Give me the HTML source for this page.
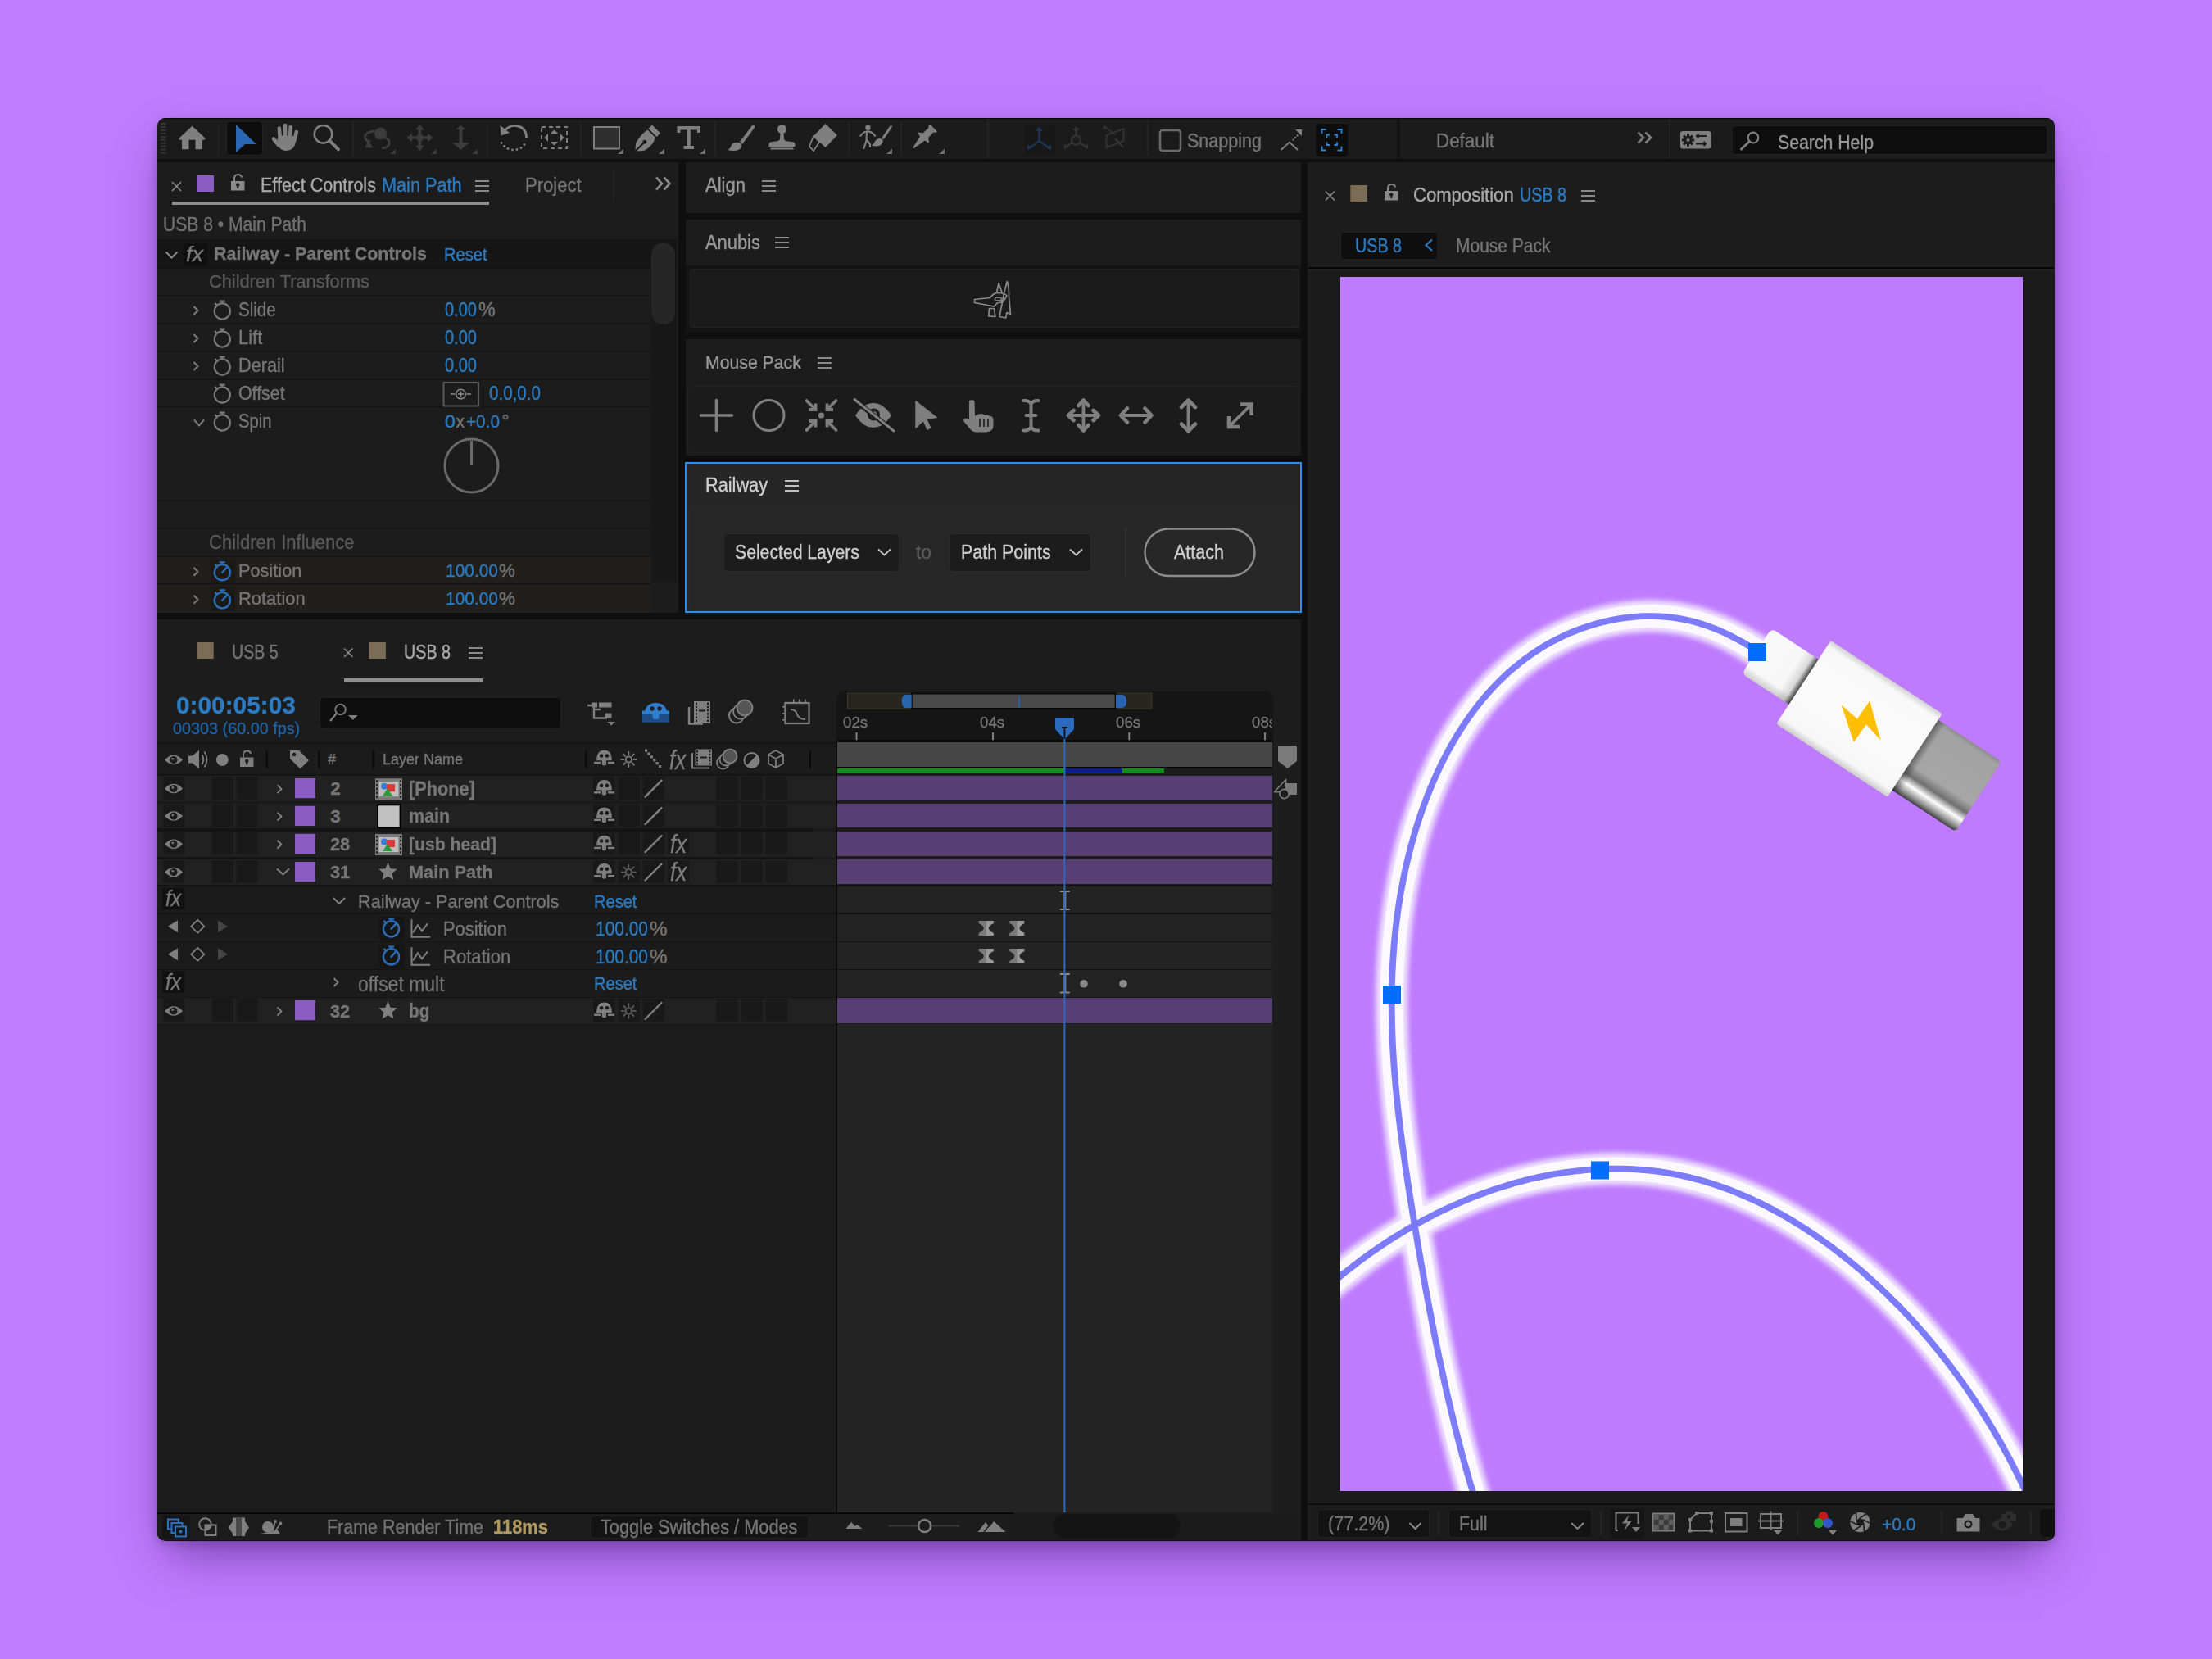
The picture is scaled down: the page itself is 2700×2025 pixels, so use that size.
<!DOCTYPE html>
<html><head><meta charset="utf-8"><style>
html,body{margin:0;padding:0;width:2700px;height:2025px;overflow:hidden;background:#be7cfe;font-family:"Liberation Sans",sans-serif;}
div{-webkit-text-stroke:0.35px currentColor;}

</style></head><body>
<div style="position:absolute;left:192px;top:144px;width:2316px;height:1737px;border-radius:10px;box-shadow:0 28px 56px -14px rgba(50,0,90,0.5),0 4px 12px rgba(30,0,60,0.22);background:#0e0e0e;"></div>
<div style="position:absolute;left:192px;top:144px;width:2316px;height:1737px;border-radius:10px;overflow:hidden;">
<div style="position:absolute;left:-192px;top:-144px;width:2700px;height:2025px;">
<div style="position:absolute;left:192px;top:145px;width:2316px;height:49px;background:#1b1b1b;"></div>
<div style="position:absolute;left:192px;top:144px;width:2316px;height:1px;background:#050505;"></div>
<div style="position:absolute;left:192px;top:198px;width:636px;height:550px;background:#1c1c1c;"></div>
<div style="position:absolute;left:837px;top:198px;width:751px;height:62px;background:#1c1c1c;"></div>
<div style="position:absolute;left:837px;top:268px;width:751px;height:137.5px;background:#1c1c1c;"></div>
<div style="position:absolute;left:837px;top:413.5px;width:751px;height:142px;background:#1c1c1c;"></div>
<div style="position:absolute;left:836px;top:564px;width:753px;height:184px;background:#262626;"></div>
<div style="position:absolute;box-sizing:border-box;left:836px;top:564px;width:753px;height:184px;background:transparent;border:2px solid #2d8df0;border-radius:0px;"></div>
<div style="position:absolute;left:192px;top:756px;width:1396px;height:1124px;background:#1c1c1c;"></div>
<div style="position:absolute;left:1596px;top:198px;width:912px;height:1682px;background:#1c1c1c;"></div>
<svg style="position:absolute;left:0;top:0;z-index:2" width="2700" height="2025"><rect x="196" y="150.00" width="6.5" height="2" fill="#343434"/><rect x="196" y="153.95" width="6.5" height="2" fill="#343434"/><rect x="196" y="157.90" width="6.5" height="2" fill="#343434"/><rect x="196" y="161.85" width="6.5" height="2" fill="#343434"/><rect x="196" y="165.80" width="6.5" height="2" fill="#343434"/><rect x="196" y="169.75" width="6.5" height="2" fill="#343434"/><rect x="196" y="173.70" width="6.5" height="2" fill="#343434"/><rect x="196" y="177.65" width="6.5" height="2" fill="#343434"/><rect x="196" y="181.60" width="6.5" height="2" fill="#343434"/><rect x="196" y="185.55" width="6.5" height="2" fill="#343434"/><rect x="265.5" y="148" width="2" height="42" fill="#232323"/><rect x="430" y="148" width="2" height="42" fill="#232323"/><rect x="593.6" y="148" width="2" height="42" fill="#232323"/><rect x="708" y="148" width="2" height="42" fill="#232323"/><rect x="872" y="148" width="2" height="42" fill="#232323"/><rect x="1035.6" y="148" width="2" height="42" fill="#232323"/><rect x="1099" y="148" width="2" height="42" fill="#232323"/><rect x="1399.5" y="148" width="2" height="42" fill="#232323"/><rect x="1204.5" y="145" width="3" height="49" fill="#222"/><rect x="1705.5" y="145" width="3" height="49" fill="#111"/><rect x="2037" y="145" width="2" height="49" fill="#222"/><path d="M234.5 153.8 L218.5 168.8 Q218 170 219.5 170.5 L222 171 L222 182.3 L230.5 182.3 L230.5 170.8 L238.5 170.8 L238.5 182.3 L247 182.3 L247 171 L249.5 170.5 Q251 170 250.5 168.8 Z" fill="#7f7f7f"/><rect x="276.5" y="148" width="44" height="41.5" rx="5" fill="#0d0d0d" stroke="#242424" stroke-width="1"/><path d="M288 152 L313 176 L299 176 L288 186 Z" fill="#2a67b2"/><g stroke="#7f7f7f" stroke-width="4.6" stroke-linecap="round" fill="none"><path d="M341.8 169 L340.8 156.5"/><path d="M348 168 L348 153"/><path d="M354 168 L354.8 155"/><path d="M359.5 171 L361.8 161"/><path d="M340 177 L334 169.5"/></g><path d="M338.5 170 Q339 166 344 165.5 L358 166 Q362 167 361 173 Q359 184 349.5 184 Q341.5 184 338.5 176 Z" fill="#7f7f7f"/><circle cx="394.5" cy="163.8" r="10.8" fill="none" stroke="#7f7f7f" stroke-width="2.6"/><line x1="402.5" y1="171.8" x2="413" y2="182.3" stroke="#7f7f7f" stroke-width="4" stroke-linecap="round"/><circle cx="464.5" cy="163" r="7.5" fill="#3b3b3b"/><path d="M457 160 Q446 161 445.5 167 Q446 172 452 173" fill="none" stroke="#3b3b3b" stroke-width="3"/><path d="M469 167 Q476 170 475 176 Q473 181 466 180.5" fill="none" stroke="#3b3b3b" stroke-width="3"/><path d="M449 171 L456 180.5 L446 180.5 Z" fill="#3b3b3b"/><path d="M512.5 152 L518 158.5 L514.3 158.5 L514.3 166.2 L522 166.2 L522 162.5 L528.5 168 L522 173.5 L522 169.8 L514.3 169.8 L514.3 177.5 L518 177.5 L512.5 184 L507 177.5 L510.7 177.5 L510.7 169.8 L503 169.8 L503 173.5 L496.5 168 L503 162.5 L503 166.2 L510.7 166.2 L510.7 158.5 L507 158.5 Z" fill="#3b3b3b"/><circle cx="512.5" cy="168" r="4.5" fill="#3b3b3b"/><path d="M562.5 153 L568.5 158 L564.5 158 L564.5 174 L573 174 L562.5 183 L552 174 L560.5 174 L560.5 158 L556.5 158 Z" fill="#3b3b3b"/><path d="M483 181.5 L483 188 L476 188 Z" fill="#3a3a3a"/><path d="M533 181.5 L533 188 L526 188 Z" fill="#3a3a3a"/><path d="M583 181.5 L583 188 L576 188 Z" fill="#3a3a3a"/><path d="M761 181.5 L761 188 L754 188 Z" fill="#6f6f6f"/><path d="M811 181.5 L811 188 L804 188 Z" fill="#6f6f6f"/><path d="M861 181.5 L861 188 L854 188 Z" fill="#6f6f6f"/><path d="M1089 181.5 L1089 188 L1082 188 Z" fill="#6f6f6f"/><path d="M1153 181.5 L1153 188 L1146 188 Z" fill="#6f6f6f"/><path d="M613.5 163 Q620 152.5 630 153.5 Q642.5 155.5 642.5 168" fill="none" stroke="#7f7f7f" stroke-width="2.8"/><path d="M610.5 153 L611.5 165.5 L622 162 Z" fill="#7f7f7f"/><circle cx="612" cy="174.5" r="1.4" fill="#7f7f7f"/><circle cx="615.5" cy="178.5" r="1.4" fill="#7f7f7f"/><circle cx="620" cy="181.5" r="1.4" fill="#7f7f7f"/><circle cx="625.5" cy="183" r="1.4" fill="#7f7f7f"/><circle cx="631" cy="182.5" r="1.4" fill="#7f7f7f"/><circle cx="636" cy="180.5" r="1.4" fill="#7f7f7f"/><circle cx="640" cy="176.5" r="1.4" fill="#7f7f7f"/><rect x="661" y="155" width="31" height="26" fill="none" stroke="#7f7f7f" stroke-width="2" stroke-dasharray="5 4"/><path d="M676.5 158.5 L681.5 163 L671.5 163 Z M676.5 177.5 L681.5 173 L671.5 173 Z M664.5 168 L669 163 L669 173 Z M688.5 168 L684 163 L684 173 Z" fill="#7f7f7f"/><rect x="725" y="155" width="31" height="26.5" fill="#2e2e2e" stroke="#7f7f7f" stroke-width="2"/><path d="M796 152.5 L806 162.5 L801.5 167 L791.5 157 Z" fill="#7f7f7f"/><path d="M790.5 158.5 L800 168 Q797 178 786.5 183.8 Q781 184.5 777 184.5 L786 175.5 A2.5 2.5 0 1 0 784.5 174 L775.5 183 Q775.5 179.5 776.3 174.3 Q782 164 790.5 158.5 Z" fill="#7f7f7f"/><path d="M826.5 154 L855 154 L855 162 L851 162 L851 158.5 L842.8 158.5 L842.8 178 L847 178 L847 182 L834.5 182 L834.5 178 L838.7 178 L838.7 158.5 L830.5 158.5 L830.5 162 L826.5 162 Z" fill="#7f7f7f"/><path d="M920 152.5 Q922 153 920.5 156.5 L906 176 L903 173 L917.5 154 Q919 152.3 920 152.5 Z" fill="#7f7f7f"/><path d="M902.5 174 L905.5 177 Q905 184 896 184 Q891 184 888 183 Q891.5 181.5 892.5 178 Q894 173 902.5 174 Z" fill="#7f7f7f"/><circle cx="954.5" cy="157.6" r="5.6" fill="#7f7f7f"/><path d="M952.5 162 L956.5 162 L957 170 Q958 172 962 172.5 L968 173.3 Q970.5 173.8 970.5 176 L970.5 179 L938.5 179 L938.5 176 Q938.5 173.8 941 173.3 L947 172.5 Q951 172 952 170 Z" fill="#7f7f7f"/><rect x="940.5" y="180.5" width="28" height="2" fill="#7f7f7f"/><path d="M1007.5 151 L1022 165 L1007.5 180 L993 166 Z" fill="#7f7f7f"/><path d="M993 166 L1000.5 173 L993 184 L988 178.5 Z" fill="none" stroke="#7f7f7f" stroke-width="1.8"/><circle cx="1059.5" cy="155.8" r="3.2" fill="#7f7f7f"/><path d="M1050 166.5 Q1053 161 1058 160.5 Q1063 160 1067 164.5 L1068.5 166.5" fill="none" stroke="#7f7f7f" stroke-width="2.2"/><path d="M1058 161 L1057.5 172 L1054 182" fill="none" stroke="#7f7f7f" stroke-width="2.2"/><path d="M1058 171 L1062 176 L1062 180" fill="none" stroke="#7f7f7f" stroke-width="2.2"/><path d="M1088.5 153 Q1089.5 154 1088 156.5 L1078.5 170.5 L1076 168.5 L1086 154.3 Q1087.5 152.5 1088.5 153 Z" fill="#7f7f7f"/><path d="M1075 169 L1078 171.5 Q1077 178 1070 178.5 Q1066.5 178.5 1064 177.5 Q1067 175.5 1068 172.5 Q1070 168.5 1075 169 Z" fill="#7f7f7f"/><path d="M1135.5 152 L1143.5 160 Q1144 161.5 1142.5 161.7 L1139.5 161.5 L1133 168 L1134 173 Q1134 174.5 1132.5 174 L1129 171.5 L1115.5 181 L1114 180.5 L1123 166.5 L1120.5 163 Q1120 161.5 1121.5 161.5 L1126.5 162.5 L1133.5 156 L1133.5 153 Q1133.8 151.5 1135.5 152 Z" fill="#7f7f7f"/><rect x="1249.5" y="151" width="40" height="40" rx="5" fill="#181818" stroke="#1f1f1f"/><path d="M1268.5 172 L1268.5 159 M1268.5 172 L1257 180.5 M1268.5 172 L1280 180.5" stroke="#1c3554" stroke-width="2.4" fill="none"/><path d="M1268.5 154.5 L1273 160 L1264 160 Z M1253.5 182.5 L1254.5 176 L1259.5 181 Z M1283.5 182.5 L1282.5 176 L1277.5 181 Z" fill="#1c3554"/><circle cx="1313.5" cy="171" r="5.5" fill="none" stroke="#333" stroke-width="2.4"/><path d="M1313.5 165.5 L1313.5 157 M1309 174 L1301 179.5 M1318 174 L1326 179.5" stroke="#333" stroke-width="2.4" fill="none"/><path d="M1313.5 154 L1318 159 L1309 159 Z M1298.5 182 L1299.5 175.5 L1304 180 Z M1328.5 182 L1327.5 175.5 L1323 180 Z" fill="#333"/><path d="M1350.5 165 L1371.5 157 L1371.5 172 L1350.5 180 Z" fill="none" stroke="#333" stroke-width="2"/><path d="M1347 154 L1361 164 M1361 169 L1371 180" stroke="#333" stroke-width="2"/><path d="M1346 153.5 L1352 154.5 L1347.5 159 Z" fill="#333"/><rect x="1416" y="159" width="25" height="25" rx="3" fill="none" stroke="#6a6a6a" stroke-width="2.5"/><path d="M1563.5 183 L1574 173.5 L1584 183" fill="none" stroke="#7f7f7f" stroke-width="2"/><path d="M1589 158 L1589 166 L1581 158 Z" fill="#7f7f7f"/><rect x="1577.5" y="169.5" width="2" height="2" fill="#7f7f7f"/><rect x="1580" y="167" width="2" height="2" fill="#7f7f7f"/><rect x="1582.5" y="164.5" width="2" height="2" fill="#7f7f7f"/><rect x="1605.5" y="150.5" width="40.5" height="41.5" rx="5" fill="#0d0d0d" stroke="#1f1f1f"/><path d="M1613.5 163 L1613.5 158 L1618.5 158 M1632.5 158 L1637.5 158 L1637.5 163 M1637.5 178.5 L1637.5 183.5 L1632.5 183.5 M1618.5 183.5 L1613.5 183.5 L1613.5 178.5" fill="none" stroke="#2f86d6" stroke-width="1.8"/><path d="M1619.5 168 L1619.5 164.5 L1623 164.5 M1628.5 164.5 L1632 164.5 L1632 168 M1632 173.5 L1632 177 L1628.5 177 M1623 177 L1619.5 177 L1619.5 173.5" fill="none" stroke="#2f86d6" stroke-width="1.8"/><path d="M1999.5 161.5 L2006 168 L1999.5 174.5 M2008.5 161.5 L2015 168 L2008.5 174.5" fill="none" stroke="#7f7f7f" stroke-width="2.6"/><rect x="2051" y="160" width="37.5" height="21.5" rx="3" fill="#7f7f7f"/><circle cx="2060.5" cy="171" r="5.3" fill="#1b1b1b"/><circle cx="2060.5" cy="171" r="2" fill="#7f7f7f"/><rect x="2065.20" y="169.50" width="3" height="3" fill="#1b1b1b" transform="rotate(0 2066.70 171.00)"/><rect x="2063.38" y="173.88" width="3" height="3" fill="#1b1b1b" transform="rotate(45 2064.88 175.38)"/><rect x="2059.00" y="175.70" width="3" height="3" fill="#1b1b1b" transform="rotate(90 2060.50 177.20)"/><rect x="2054.62" y="173.88" width="3" height="3" fill="#1b1b1b" transform="rotate(135 2056.12 175.38)"/><rect x="2052.80" y="169.50" width="3" height="3" fill="#1b1b1b" transform="rotate(180 2054.30 171.00)"/><rect x="2054.62" y="165.12" width="3" height="3" fill="#1b1b1b" transform="rotate(225 2056.12 166.62)"/><rect x="2059.00" y="163.30" width="3" height="3" fill="#1b1b1b" transform="rotate(270 2060.50 164.80)"/><rect x="2063.38" y="165.12" width="3" height="3" fill="#1b1b1b" transform="rotate(315 2064.88 166.62)"/><path d="M2071 166 L2083 166 M2073.5 163.5 L2071 166 L2073.5 168.5 M2070 175.5 L2082 175.5 M2079.5 173 L2082 175.5 L2079.5 178" fill="none" stroke="#1b1b1b" stroke-width="2"/><rect x="2114" y="153.5" width="385" height="35" rx="4" fill="#0e0e0e" stroke="#242424" stroke-width="1"/><circle cx="2140" cy="168" r="6.3" fill="none" stroke="#7f7f7f" stroke-width="2.2"/><line x1="2135.5" y1="172.5" x2="2125.5" y2="182" stroke="#7f7f7f" stroke-width="3" stroke-linecap="round"/></svg>
<div style="position:absolute;z-index:3;left:1449.00px;top:160.52px;font-size:23.62px;line-height:23.62px;font-weight:400;font-style:normal;letter-spacing:0.000px;color:#767676;white-space:pre;transform:scaleX(0.9107);transform-origin:0 0;">Snapping</div>
<div style="position:absolute;z-index:3;left:1753.00px;top:160.52px;font-size:23.62px;line-height:23.62px;font-weight:400;font-style:normal;letter-spacing:0.000px;color:#767676;white-space:pre;transform:scaleX(0.9481);transform-origin:0 0;">Default</div>
<div style="position:absolute;z-index:3;left:2170.00px;top:161.53px;font-size:24.78px;line-height:24.78px;font-weight:400;font-style:normal;letter-spacing:0.000px;color:#999;white-space:pre;transform:scaleX(0.8584);transform-origin:0 0;">Search Help</div>
<div style="position:absolute;z-index:3;left:317.50px;top:213.86px;font-size:24.64px;line-height:24.64px;font-weight:400;font-style:normal;letter-spacing:0.000px;color:#ababab;white-space:pre;transform:scaleX(0.8751);transform-origin:0 0;">Effect Controls</div>
<div style="position:absolute;z-index:3;left:465.50px;top:213.86px;font-size:24.64px;line-height:24.64px;font-weight:400;font-style:normal;letter-spacing:0.000px;color:#2c7cc4;white-space:pre;transform:scaleX(0.8794);transform-origin:0 0;">Main Path</div>
<div style="position:absolute;z-index:3;left:641.00px;top:214.72px;font-size:23.62px;line-height:23.62px;font-weight:400;font-style:normal;letter-spacing:0.000px;color:#767676;white-space:pre;transform:scaleX(0.9324);transform-origin:0 0;">Project</div>
<div style="position:absolute;z-index:3;left:199.00px;top:261.86px;font-size:24.64px;line-height:24.64px;font-weight:400;font-style:normal;letter-spacing:0.000px;color:#727272;white-space:pre;transform:scaleX(0.8558);transform-origin:0 0;">USB 8 • Main Path</div>
<div style="position:absolute;left:192px;top:292px;width:634px;height:36px;background:#151515;"></div>
<div style="position:absolute;z-index:3;left:261.00px;top:299.21px;font-size:22.46px;line-height:22.46px;font-weight:700;font-style:normal;letter-spacing:0.000px;color:#767676;white-space:pre;transform:scaleX(0.9558);transform-origin:0 0;">Railway - Parent Controls</div>
<div style="position:absolute;z-index:3;left:541.50px;top:299.51px;font-size:22.46px;line-height:22.46px;font-weight:400;font-style:normal;letter-spacing:0.000px;color:#2c7cc4;white-space:pre;transform:scaleX(0.8954);transform-origin:0 0;">Reset</div>
<div style="position:absolute;left:794px;top:328px;width:32px;height:383px;background:#181818;"></div>
<div style="position:absolute;left:192px;top:679.5px;width:602px;height:33px;background:#201f1c;"></div>
<div style="position:absolute;left:192px;top:713.5px;width:602px;height:34px;background:#201f1c;"></div>
<div style="position:absolute;z-index:3;left:255.00px;top:333.21px;font-size:22.46px;line-height:22.46px;font-weight:400;font-style:normal;letter-spacing:0.000px;color:#5a5a5a;white-space:pre;transform:scaleX(0.9695);transform-origin:0 0;">Children Transforms</div>
<div style="position:absolute;z-index:3;left:291.40px;top:367.09px;font-size:23.19px;line-height:23.19px;font-weight:400;font-style:normal;letter-spacing:0.000px;color:#767676;white-space:pre;transform:scaleX(0.8858);transform-origin:0 0;">Slide</div>
<div style="position:absolute;z-index:3;left:291.40px;top:401.09px;font-size:23.19px;line-height:23.19px;font-weight:400;font-style:normal;letter-spacing:0.000px;color:#767676;white-space:pre;transform:scaleX(0.9462);transform-origin:0 0;">Lift</div>
<div style="position:absolute;z-index:3;left:291.40px;top:435.09px;font-size:23.19px;line-height:23.19px;font-weight:400;font-style:normal;letter-spacing:0.000px;color:#767676;white-space:pre;transform:scaleX(0.9352);transform-origin:0 0;">Derail</div>
<div style="position:absolute;z-index:3;left:291.40px;top:469.09px;font-size:23.19px;line-height:23.19px;font-weight:400;font-style:normal;letter-spacing:0.000px;color:#767676;white-space:pre;transform:scaleX(0.9211);transform-origin:0 0;">Offset</div>
<div style="position:absolute;z-index:3;left:291.40px;top:503.09px;font-size:23.19px;line-height:23.19px;font-weight:400;font-style:normal;letter-spacing:0.000px;color:#767676;white-space:pre;transform:scaleX(0.8754);transform-origin:0 0;">Spin</div>
<div style="position:absolute;z-index:3;left:543.00px;top:367.09px;font-size:23.19px;line-height:23.19px;font-weight:400;font-style:normal;letter-spacing:0.000px;color:#2c7cc4;white-space:pre;transform:scaleX(0.8625);transform-origin:0 0;">0.00</div>
<div style="position:absolute;z-index:3;left:584.00px;top:367.09px;font-size:23.19px;line-height:23.19px;font-weight:400;font-style:normal;letter-spacing:0.000px;color:#767676;white-space:pre;">%</div>
<div style="position:absolute;z-index:3;left:543.00px;top:401.09px;font-size:23.19px;line-height:23.19px;font-weight:400;font-style:normal;letter-spacing:0.000px;color:#2c7cc4;white-space:pre;transform:scaleX(0.8625);transform-origin:0 0;">0.00</div>
<div style="position:absolute;z-index:3;left:543.00px;top:435.09px;font-size:23.19px;line-height:23.19px;font-weight:400;font-style:normal;letter-spacing:0.000px;color:#2c7cc4;white-space:pre;transform:scaleX(0.8625);transform-origin:0 0;">0.00</div>
<div style="position:absolute;z-index:3;left:597.00px;top:469.09px;font-size:23.19px;line-height:23.19px;font-weight:400;font-style:normal;letter-spacing:0.000px;color:#2c7cc4;white-space:pre;transform:scaleX(0.8879);transform-origin:0 0;">0.0,0.0</div>
<div style="position:absolute;z-index:3;left:543.10px;top:503.24px;font-size:22.90px;line-height:22.90px;font-weight:400;font-style:normal;letter-spacing:0.000px;color:#2c7cc4;white-space:pre;">0</div>
<div style="position:absolute;z-index:3;left:556.20px;top:504.07px;font-size:21.92px;line-height:21.92px;font-weight:400;font-style:normal;letter-spacing:0.000px;color:#767676;white-space:pre;">x</div>
<div style="position:absolute;z-index:3;left:569.10px;top:503.24px;font-size:22.90px;line-height:22.90px;font-weight:400;font-style:normal;letter-spacing:0.000px;color:#2c7cc4;white-space:pre;transform:scaleX(0.9067);transform-origin:0 0;">+0.0</div>
<div style="position:absolute;z-index:3;left:612.50px;top:503.61px;font-size:22.46px;line-height:22.46px;font-weight:400;font-style:normal;letter-spacing:0.000px;color:#767676;white-space:pre;">°</div>
<div style="position:absolute;z-index:3;left:255.00px;top:650.84px;font-size:23.48px;line-height:23.48px;font-weight:400;font-style:normal;letter-spacing:0.000px;color:#5a5a5a;white-space:pre;transform:scaleX(0.9385);transform-origin:0 0;">Children Influence</div>
<div style="position:absolute;z-index:3;left:291.40px;top:686.23px;font-size:22.32px;line-height:22.32px;font-weight:400;font-style:normal;letter-spacing:0.000px;color:#767676;white-space:pre;transform:scaleX(0.9741);transform-origin:0 0;">Position</div>
<div style="position:absolute;z-index:3;left:543.50px;top:686.23px;font-size:22.32px;line-height:22.32px;font-weight:400;font-style:normal;letter-spacing:0.000px;color:#2c7cc4;white-space:pre;transform:scaleX(0.9371);transform-origin:0 0;">100.00</div>
<div style="position:absolute;z-index:3;left:609.00px;top:686.23px;font-size:22.32px;line-height:22.32px;font-weight:400;font-style:normal;letter-spacing:0.000px;color:#767676;white-space:pre;">%</div>
<div style="position:absolute;z-index:3;left:291.40px;top:720.21px;font-size:22.46px;line-height:22.46px;font-weight:400;font-style:normal;letter-spacing:0.000px;color:#767676;white-space:pre;transform:scaleX(0.9765);transform-origin:0 0;">Rotation</div>
<div style="position:absolute;z-index:3;left:543.50px;top:720.21px;font-size:22.46px;line-height:22.46px;font-weight:400;font-style:normal;letter-spacing:0.000px;color:#2c7cc4;white-space:pre;transform:scaleX(0.9311);transform-origin:0 0;">100.00</div>
<div style="position:absolute;z-index:3;left:609.00px;top:720.21px;font-size:22.46px;line-height:22.46px;font-weight:400;font-style:normal;letter-spacing:0.000px;color:#767676;white-space:pre;">%</div>
<svg style="position:absolute;left:0;top:0;z-index:2" width="2700" height="2025"><path d="M210 222 L221 233 M221 222 L210 233" stroke="#8a8a8a" stroke-width="1.6"/><rect x="240" y="214" width="21" height="20" fill="#8a5cc2"/><path d="M286 221 L286 218 Q286 213 290.5 213 Q294.5 213 295 216.5" fill="none" stroke="#8a8a8a" stroke-width="2"/><rect x="282" y="221" width="16.5" height="11.5" fill="#8a8a8a"/><circle cx="290.25" cy="225.5" r="2.2" fill="#1c1c1c"/><rect x="289.2" y="226" width="2.1" height="4" fill="#1c1c1c"/><rect x="580" y="220.00" width="17" height="2" fill="#8a8a8a"/><rect x="580" y="226.00" width="17" height="2" fill="#8a8a8a"/><rect x="580" y="232.00" width="17" height="2" fill="#8a8a8a"/><rect x="210" y="246" width="387" height="4" fill="#8e8e8e"/><rect x="748.5" y="206" width="1.5" height="39" fill="#262626"/><path d="M801 216.5 L808 224 L801 231.5 M810.5 216.5 L817.5 224 L810.5 231.5" fill="none" stroke="#8a8a8a" stroke-width="2.6"/><path d="M202.5 307.5 L209.5 314.5 L216.5 307.5" fill="none" stroke="#8a8a8a" stroke-width="2"/><rect x="224.5" y="296.5" width="28" height="27" fill="#0f0f0f"/><rect x="795" y="296" width="29" height="100" rx="14.5" fill="#262626"/><rect x="192" y="326.8" width="602" height="1.5" fill="#141414"/><rect x="192" y="360.0" width="602" height="1.5" fill="#141414"/><rect x="192" y="394.5" width="602" height="1.5" fill="#141414"/><rect x="192" y="428.2" width="602" height="1.5" fill="#141414"/><rect x="192" y="462.5" width="602" height="1.5" fill="#141414"/><rect x="192" y="496.0" width="602" height="1.5" fill="#141414"/><rect x="192" y="610.0" width="602" height="1.5" fill="#141414"/><rect x="192" y="644.5" width="602" height="1.5" fill="#141414"/><rect x="192" y="678.5" width="602" height="1.5" fill="#141414"/><rect x="192" y="712.0" width="602" height="1.5" fill="#141414"/><path d="M236.5 374.0 L241.5 379.0 L236.5 384.0" fill="none" stroke="#7a7a7a" stroke-width="2"/><circle cx="271.3" cy="380.0" r="9.6" fill="none" stroke="#7a7a7a" stroke-width="2.2"/><rect x="267.8" y="366.5" width="7" height="2.2" fill="#7a7a7a"/><rect x="270.2" y="368.0" width="2.2" height="3" fill="#7a7a7a"/><path d="M262.3 370.0 L264.8 372.5" stroke="#7a7a7a" stroke-width="2.2"/><path d="M236.5 408.0 L241.5 413.0 L236.5 418.0" fill="none" stroke="#7a7a7a" stroke-width="2"/><circle cx="271.3" cy="414.0" r="9.6" fill="none" stroke="#7a7a7a" stroke-width="2.2"/><rect x="267.8" y="400.5" width="7" height="2.2" fill="#7a7a7a"/><rect x="270.2" y="402.0" width="2.2" height="3" fill="#7a7a7a"/><path d="M262.3 404.0 L264.8 406.5" stroke="#7a7a7a" stroke-width="2.2"/><path d="M236.5 442.0 L241.5 447.0 L236.5 452.0" fill="none" stroke="#7a7a7a" stroke-width="2"/><circle cx="271.3" cy="448.0" r="9.6" fill="none" stroke="#7a7a7a" stroke-width="2.2"/><rect x="267.8" y="434.5" width="7" height="2.2" fill="#7a7a7a"/><rect x="270.2" y="436.0" width="2.2" height="3" fill="#7a7a7a"/><path d="M262.3 438.0 L264.8 440.5" stroke="#7a7a7a" stroke-width="2.2"/><circle cx="271.3" cy="482.0" r="9.6" fill="none" stroke="#7a7a7a" stroke-width="2.2"/><rect x="267.8" y="468.5" width="7" height="2.2" fill="#7a7a7a"/><rect x="270.2" y="470.0" width="2.2" height="3" fill="#7a7a7a"/><path d="M262.3 472.0 L264.8 474.5" stroke="#7a7a7a" stroke-width="2.2"/><path d="M237 512.5 L243.0 519.5 L249 512.5" fill="none" stroke="#7a7a7a" stroke-width="2"/><circle cx="271.3" cy="516.0" r="9.6" fill="none" stroke="#7a7a7a" stroke-width="2.2"/><rect x="267.8" y="502.5" width="7" height="2.2" fill="#7a7a7a"/><rect x="270.2" y="504.0" width="2.2" height="3" fill="#7a7a7a"/><path d="M262.3 506.0 L264.8 508.5" stroke="#7a7a7a" stroke-width="2.2"/><rect x="541.5" y="467" width="42.5" height="28.5" fill="none" stroke="#5a5a5a" stroke-width="2"/><circle cx="562.5" cy="481" r="5.8" fill="none" stroke="#8a8a8a" stroke-width="1.5"/><path d="M550 481 L555.5 481 M569.5 481 L575 481 M562.5 477.5 L562.5 484.5 M559 481 L566 481" stroke="#8a8a8a" stroke-width="1.5"/><circle cx="575.5" cy="568.5" r="32.5" fill="none" stroke="#6a6a6a" stroke-width="3"/><rect x="574" y="538" width="3" height="30" fill="#6a6a6a"/><path d="M236.5 692.7 L241.5 697.7 L236.5 702.7" fill="none" stroke="#7a7a7a" stroke-width="2"/><rect x="257" y="681.7" width="30" height="30" fill="#1b1a17"/><circle cx="271.3" cy="698.7" r="9.6" fill="none" stroke="#2a6eb8" stroke-width="2.4"/><rect x="267.8" y="685.2" width="7" height="2.2" fill="#2a6eb8"/><rect x="270.2" y="686.7" width="2.2" height="3" fill="#2a6eb8"/><path d="M262.3 688.7 L264.8 691.2" stroke="#2a6eb8" stroke-width="2.4"/><path d="M271.3 698.7 L276.3 693.2" stroke="#2a6eb8" stroke-width="2.4" stroke-linecap="round"/><path d="M236.5 726.75 L241.5 731.75 L236.5 736.75" fill="none" stroke="#7a7a7a" stroke-width="2"/><rect x="257" y="715.75" width="30" height="30" fill="#1b1a17"/><circle cx="271.3" cy="732.75" r="9.6" fill="none" stroke="#2a6eb8" stroke-width="2.4"/><rect x="267.8" y="719.25" width="7" height="2.2" fill="#2a6eb8"/><rect x="270.2" y="720.75" width="2.2" height="3" fill="#2a6eb8"/><path d="M262.3 722.75 L264.8 725.25" stroke="#2a6eb8" stroke-width="2.4"/><path d="M271.3 732.75 L276.3 727.25" stroke="#2a6eb8" stroke-width="2.4" stroke-linecap="round"/></svg>
<div style="position:absolute;z-index:3;left:227.00px;top:296.63px;font-size:26.09px;line-height:26.09px;font-weight:400;font-style:italic;letter-spacing:0.000px;color:#7a7a7a;white-space:pre;transform:scaleX(1.0412);transform-origin:0 0;">fx</div>
<div style="position:absolute;z-index:3;left:860.50px;top:214.47px;font-size:23.91px;line-height:23.91px;font-weight:400;font-style:normal;letter-spacing:0.000px;color:#9a9a9a;white-space:pre;transform:scaleX(0.9230);transform-origin:0 0;">Align</div>
<div style="position:absolute;z-index:3;left:860.50px;top:283.86px;font-size:24.64px;line-height:24.64px;font-weight:400;font-style:normal;letter-spacing:0.000px;color:#9a9a9a;white-space:pre;transform:scaleX(0.8887);transform-origin:0 0;">Anubis</div>
<div style="position:absolute;left:837px;top:324px;width:751px;height:81.5px;background:#141414;"></div>
<div style="position:absolute;box-sizing:border-box;left:842px;top:328px;width:744px;height:72px;background:#1b1b1b;border:1px solid #222;border-radius:4px;"></div>
<div style="position:absolute;z-index:3;left:861.00px;top:431.65px;font-size:22.17px;line-height:22.17px;font-weight:400;font-style:normal;letter-spacing:0.000px;color:#9a9a9a;white-space:pre;transform:scaleX(0.9576);transform-origin:0 0;">Mouse Pack</div>
<div style="position:absolute;box-sizing:border-box;left:839px;top:470.5px;width:747px;height:82.5px;background:#1b1b1b;border:1px solid #222;border-radius:4px;"></div>
<div style="position:absolute;z-index:3;left:861.00px;top:581.04px;font-size:23.48px;line-height:23.48px;font-weight:400;font-style:normal;letter-spacing:0.000px;color:#cfcfcf;white-space:pre;transform:scaleX(0.9249);transform-origin:0 0;">Railway</div>
<div style="position:absolute;box-sizing:border-box;left:840px;top:620px;width:746px;height:126px;background:#272727;border:1px solid #2c2c2c;border-radius:4px;"></div>
<div style="position:absolute;box-sizing:border-box;left:883px;top:650.5px;width:214.5px;height:47px;background:#1c1c1c;border:1px solid #2c2c2c;border-radius:5px;"></div>
<div style="position:absolute;z-index:3;left:897.00px;top:662.72px;font-size:23.62px;line-height:23.62px;font-weight:400;font-style:normal;letter-spacing:0.000px;color:#cfcfcf;white-space:pre;transform:scaleX(0.8974);transform-origin:0 0;">Selected Layers</div>
<div style="position:absolute;z-index:3;left:1118.40px;top:663.09px;font-size:23.19px;line-height:23.19px;font-weight:400;font-style:normal;letter-spacing:0.000px;color:#5a5a5a;white-space:pre;transform:scaleX(0.9872);transform-origin:0 0;">to</div>
<div style="position:absolute;box-sizing:border-box;left:1159px;top:650.5px;width:173px;height:47px;background:#1c1c1c;border:1px solid #2c2c2c;border-radius:5px;"></div>
<div style="position:absolute;z-index:3;left:1173.00px;top:662.72px;font-size:23.62px;line-height:23.62px;font-weight:400;font-style:normal;letter-spacing:0.000px;color:#cfcfcf;white-space:pre;transform:scaleX(0.9079);transform-origin:0 0;">Path Points</div>
<div style="position:absolute;z-index:3;left:1433.00px;top:662.15px;font-size:24.06px;line-height:24.06px;font-weight:400;font-style:normal;letter-spacing:0.000px;color:#cfcfcf;white-space:pre;transform:scaleX(0.8960);transform-origin:0 0;">Attach</div>
<svg style="position:absolute;left:0;top:0;z-index:2" width="2700" height="2025"><rect x="930" y="220.00" width="17" height="2" fill="#8a8a8a"/><rect x="930" y="226.00" width="17" height="2" fill="#8a8a8a"/><rect x="930" y="232.00" width="17" height="2" fill="#8a8a8a"/><rect x="946" y="289.00" width="17" height="2" fill="#8a8a8a"/><rect x="946" y="295.00" width="17" height="2" fill="#8a8a8a"/><rect x="946" y="301.00" width="17" height="2" fill="#8a8a8a"/><path d="M1189.5 365.5 L1208.5 363.5 Q1213 357 1220 357.5 Q1226 358 1229 361 L1224.5 368 Q1221 369.5 1217 370 L1213.5 374 L1189.5 369.5 Z" stroke="#8a8a8a" stroke-width="1.7" fill="none" stroke-linejoin="round"/><path d="M1216.5 357.5 L1219 345.5 L1223 357" stroke="#8a8a8a" stroke-width="1.7" fill="none" stroke-linejoin="round"/><path d="M1225.5 358 L1229.3 343.5 Q1232 352 1231.5 362 L1233.5 383.5 L1229 381.5 L1227.5 388 L1220 386.5 Z" stroke="#8a8a8a" stroke-width="1.7" fill="none" stroke-linejoin="round"/><path d="M1207.5 376.5 L1213.5 376.5 L1214.8 386.5 L1206.7 385.8 Z" stroke="#8a8a8a" stroke-width="1.7" fill="none" stroke-linejoin="round"/><ellipse cx="1218.5" cy="365" rx="4.2" ry="1.9" fill="none" stroke="#8a8a8a" stroke-width="1.4"/><rect x="998" y="436.00" width="17" height="2" fill="#8a8a8a"/><rect x="998" y="442.00" width="17" height="2" fill="#8a8a8a"/><rect x="998" y="448.00" width="17" height="2" fill="#8a8a8a"/><path d="M874.5 488.5 L874.5 525.5 M855.5 507 L893.5 507" stroke="#7f7f7f" stroke-width="3.6" stroke-linecap="round"/><circle cx="938.5" cy="507" r="18.5" fill="none" stroke="#7f7f7f" stroke-width="3"/><circle cx="1002.5" cy="507" r="3.6" fill="#7f7f7f"/><path d="M984.5 489 L995.5 500" stroke="#7f7f7f" stroke-width="3.6" stroke-linecap="round"/><path d="M995.5 492.5 L995.5 500 L988.0 500" fill="none" stroke="#7f7f7f" stroke-width="3.8" stroke-linecap="butt" stroke-linejoin="miter"/><path d="M1020.5 489 L1009.5 500" stroke="#7f7f7f" stroke-width="3.6" stroke-linecap="round"/><path d="M1009.5 492.5 L1009.5 500 L1017.0 500" fill="none" stroke="#7f7f7f" stroke-width="3.8" stroke-linecap="butt" stroke-linejoin="miter"/><path d="M984.5 525 L995.5 514" stroke="#7f7f7f" stroke-width="3.6" stroke-linecap="round"/><path d="M995.5 521.5 L995.5 514 L988.0 514" fill="none" stroke="#7f7f7f" stroke-width="3.8" stroke-linecap="butt" stroke-linejoin="miter"/><path d="M1020.5 525 L1009.5 514" stroke="#7f7f7f" stroke-width="3.6" stroke-linecap="round"/><path d="M1009.5 521.5 L1009.5 514 L1017.0 514" fill="none" stroke="#7f7f7f" stroke-width="3.8" stroke-linecap="butt" stroke-linejoin="miter"/><path d="M1044 507 Q1054 492 1066 492 Q1078 492 1088 507 Q1078 522 1066 522 Q1054 522 1044 507 Z" fill="#7f7f7f"/><circle cx="1066.5" cy="506" r="7.5" fill="#1b1b1b"/><circle cx="1066.5" cy="506" r="3.8" fill="#7f7f7f"/><path d="M1042.5 488 L1090.5 526" stroke="#1b1b1b" stroke-width="6"/><path d="M1043 487.5 L1091 526" stroke="#7f7f7f" stroke-width="3" stroke-linecap="round"/><path d="M1118 490 L1143 509.5 L1130.5 511 L1135.5 522 L1132 524 L1127 513 L1118 522 Z" fill="#7f7f7f" stroke="#7f7f7f" stroke-width="1.5" stroke-linejoin="round"/><path d="M1183 489 Q1186.5 487.5 1189.5 489 L1190 508 Q1192 505 1195.5 505.5 Q1199 504 1202 507 Q1205 505.5 1208.5 508 Q1212.5 508 1212.5 513 L1212.5 519 Q1212.5 527.5 1203 527.5 L1192 527.5 Q1187 527.5 1183.5 523 L1176.5 514.5 Q1175.5 511 1178.5 510.5 Q1180.5 510 1183 512.5 Z" fill="#7f7f7f"/><path d="M1196 511 L1196 521 M1201 511 L1201 521 M1206 511 L1206 521" stroke="#1b1b1b" stroke-width="1.6"/><path d="M1249.5 489 Q1256 488.5 1258.5 493 Q1261 488.5 1267.5 489 M1258.5 493 L1258.5 521 M1249.5 525.5 Q1256 526 1258.5 521 Q1261 526 1267.5 525.5 M1252.5 507 L1264.5 507" fill="none" stroke="#7f7f7f" stroke-width="4" stroke-linecap="round"/><path d="M1322.5 489 L1322.5 525 M1304 507 L1341 507" stroke="#7f7f7f" stroke-width="3.8"/><path d="M1316.5 495 L1322.5 488.5 L1328.5 495 M1316.5 519 L1322.5 525.5 L1328.5 519 M1310.5 501 L1304 507 L1310.5 513 M1334.5 501 L1341 507 L1334.5 513" fill="none" stroke="#7f7f7f" stroke-width="4.6" stroke-linecap="round" stroke-linejoin="round"/><path d="M1368 507 L1405.5 507" stroke="#7f7f7f" stroke-width="3.8"/><path d="M1376 498.5 L1368 507 L1376 515.5 M1397.5 498.5 L1405.5 507 L1397.5 515.5" fill="none" stroke="#7f7f7f" stroke-width="4.6" stroke-linecap="round" stroke-linejoin="round"/><path d="M1450.5 489 L1450.5 525.5" stroke="#7f7f7f" stroke-width="3.8"/><path d="M1442 497 L1450.5 488.5 L1459 497 M1442 517.5 L1450.5 526 L1459 517.5" fill="none" stroke="#7f7f7f" stroke-width="4.6" stroke-linecap="round" stroke-linejoin="round"/><path d="M1500.5 520.5 L1527 494" stroke="#7f7f7f" stroke-width="3.8"/><path d="M1514 493.5 L1527.5 493.5 L1527.5 507 M1500 508 L1500 521 L1513 521" fill="none" stroke="#7f7f7f" stroke-width="4.6" stroke-linecap="butt" stroke-linejoin="miter"/><rect x="958" y="586.00" width="17" height="2" fill="#c0c0c0"/><rect x="958" y="592.00" width="17" height="2" fill="#c0c0c0"/><rect x="958" y="598.00" width="17" height="2" fill="#c0c0c0"/><path d="M1072 670.5 L1079.5 677.5 L1087 670.5" fill="none" stroke="#c0c0c0" stroke-width="2"/><path d="M1306 670.5 L1313.5 677.5 L1321 670.5" fill="none" stroke="#c0c0c0" stroke-width="2"/><rect x="1373" y="644.5" width="2" height="59" fill="#303030"/><rect x="1397.5" y="645.5" width="134" height="57.5" rx="28.75" fill="none" stroke="#8c8c8c" stroke-width="2.5"/></svg>
<div style="position:absolute;z-index:3;left:1725.00px;top:227.09px;font-size:23.19px;line-height:23.19px;font-weight:400;font-style:normal;letter-spacing:0.000px;color:#ababab;white-space:pre;transform:scaleX(0.9517);transform-origin:0 0;">Composition</div>
<div style="position:absolute;z-index:3;left:1855.00px;top:227.09px;font-size:23.19px;line-height:23.19px;font-weight:400;font-style:normal;letter-spacing:0.000px;color:#2c7cc4;white-space:pre;transform:scaleX(0.8506);transform-origin:0 0;">USB 8</div>
<div style="position:absolute;box-sizing:border-box;left:1636px;top:283px;width:119px;height:33.5px;background:#0e0e0e;border:1px solid #202020;border-radius:4px;"></div>
<div style="position:absolute;z-index:3;left:1653.70px;top:288.67px;font-size:23.33px;line-height:23.33px;font-weight:400;font-style:normal;letter-spacing:0.000px;color:#2c7cc4;white-space:pre;transform:scaleX(0.8453);transform-origin:0 0;">USB 8</div>
<div style="position:absolute;z-index:3;left:1777.00px;top:288.67px;font-size:23.33px;line-height:23.33px;font-weight:400;font-style:normal;letter-spacing:0.000px;color:#767676;white-space:pre;transform:scaleX(0.8999);transform-origin:0 0;">Mouse Pack</div>
<div style="position:absolute;left:1597px;top:326px;width:910px;height:2px;background:#050505;"></div>
<div style="position:absolute;left:1597px;top:328px;width:910px;height:1.5px;background:#232323;"></div>
<div style="position:absolute;left:1597px;top:329.5px;width:910px;height:1505.5px;background:#1b1b1b;"></div>
<div style="position:absolute;left:1636px;top:338px;width:833px;height:1482px;background:#be7bfe;"></div>
<div style="position:absolute;left:1597px;top:1835px;width:910px;height:1.5px;background:#0c0c0c;"></div>
<div style="position:absolute;left:1597px;top:1836.5px;width:910px;height:43.5px;background:#1b1b1b;"></div>
<div style="position:absolute;box-sizing:border-box;left:1608px;top:1842px;width:137px;height:34.5px;background:#131313;border:1px solid #232323;border-radius:4px;"></div>
<div style="position:absolute;z-index:3;left:1621.00px;top:1848.47px;font-size:23.91px;line-height:23.91px;font-weight:400;font-style:normal;letter-spacing:0.000px;color:#767676;white-space:pre;transform:scaleX(0.9021);transform-origin:0 0;">(77.2%)</div>
<div style="position:absolute;box-sizing:border-box;left:1768px;top:1842px;width:175px;height:34.5px;background:#131313;border:1px solid #232323;border-radius:4px;"></div>
<div style="position:absolute;z-index:3;left:1781.00px;top:1848.47px;font-size:23.91px;line-height:23.91px;font-weight:400;font-style:normal;letter-spacing:0.000px;color:#767676;white-space:pre;transform:scaleX(0.8961);transform-origin:0 0;">Full</div>
<div style="position:absolute;z-index:3;left:2296.80px;top:1850.14px;font-size:21.59px;line-height:21.59px;font-weight:400;font-style:normal;letter-spacing:0.000px;color:#2c7cc4;white-space:pre;transform:scaleX(0.9685);transform-origin:0 0;">+0.0</div>
<svg style="position:absolute;left:0;top:0;z-index:2" width="2700" height="2025"><path d="M1618 233.5 L1629 244.5 M1629 233.5 L1618 244.5" stroke="#8a8a8a" stroke-width="1.6"/><rect x="1648.3" y="226" width="20.5" height="20" fill="#7b6c55"/><path d="M1694 233 L1694 230 Q1694 225 1698.5 225 Q1702.5 225 1703 228.5" fill="none" stroke="#8a8a8a" stroke-width="2"/><rect x="1690" y="233" width="16.5" height="11.5" fill="#8a8a8a"/><circle cx="1698.25" cy="237.5" r="2.2" fill="#1c1c1c"/><rect x="1697.2" y="238" width="2.1" height="4" fill="#1c1c1c"/><rect x="1930" y="232.00" width="17" height="2" fill="#8a8a8a"/><rect x="1930" y="238.00" width="17" height="2" fill="#8a8a8a"/><rect x="1930" y="244.00" width="17" height="2" fill="#8a8a8a"/><path d="M1748 292.5 L1740.5 299.3 L1748 306" fill="none" stroke="#2c7cc4" stroke-width="2.2"/><defs><filter id="bl" x="-10%" y="-10%" width="120%" height="120%"><feGaussianBlur stdDeviation="3.3"/></filter><clipPath id="cc"><rect x="1636" y="338" width="833" height="1482"/></clipPath><linearGradient id="gBody" x1="0" y1="-61" x2="0" y2="61" gradientUnits="userSpaceOnUse"><stop offset="0" stop-color="#d0d0d0"/><stop offset="0.07" stop-color="#f8f8f8"/><stop offset="0.5" stop-color="#fbfbfb"/><stop offset="0.92" stop-color="#f7f7f7"/><stop offset="1" stop-color="#cacaca"/></linearGradient><linearGradient id="gNeck" x1="-149" y1="0" x2="-81" y2="0" gradientUnits="userSpaceOnUse"><stop offset="0" stop-color="#f9f9f9"/><stop offset="0.7" stop-color="#f7f7f7"/><stop offset="0.88" stop-color="#d8d8d8"/><stop offset="1" stop-color="#404040"/></linearGradient><linearGradient id="gNeck2" x1="0" y1="-33" x2="0" y2="33" gradientUnits="userSpaceOnUse"><stop offset="0" stop-color="#000" stop-opacity="0"/><stop offset="0.82" stop-color="#000" stop-opacity="0"/><stop offset="1" stop-color="#000" stop-opacity="0.18"/></linearGradient><linearGradient id="gTip" x1="0" y1="-52" x2="0" y2="51" gradientUnits="userSpaceOnUse"><stop offset="0" stop-color="#8c8c8c"/><stop offset="0.06" stop-color="#a2a2a2"/><stop offset="0.62" stop-color="#a6a6a6"/><stop offset="0.74" stop-color="#707070"/><stop offset="0.84" stop-color="#fdfdfd"/><stop offset="0.93" stop-color="#9a9a9a"/><stop offset="1" stop-color="#3a3a3a"/></linearGradient><linearGradient id="gTip2" x1="81" y1="0" x2="92" y2="0" gradientUnits="userSpaceOnUse"><stop offset="0" stop-color="#000" stop-opacity="0.4"/><stop offset="1" stop-color="#000" stop-opacity="0"/></linearGradient></defs><g clip-path="url(#cc)"><g filter="url(#bl)" fill="none" stroke="#efe2ff" stroke-width="39" stroke-linecap="butt" stroke-linejoin="round"><path d="M2174.5 816.3 L2168.9 811.9 L2163.3 807.6 L2157.5 803.4 L2151.7 799.3 L2145.7 795.3 L2139.7 791.4 L2133.5 787.7 L2127.3 784.0 L2121.0 780.6 L2114.7 777.2 L2108.2 774.0 L2101.7 771.0 L2095.1 768.2 L2088.5 765.6 L2081.8 763.2 L2075.0 761.0 L2068.1 759.0 L2061.3 757.3 L2054.3 755.8 L2047.3 754.6 L2040.3 753.6 L2033.3 752.9 L2026.2 752.4 L2019.1 752.1 L2012.0 752.1 L2004.9 752.2 L1997.8 752.7 L1990.7 753.3 L1983.6 754.1 L1976.5 755.2 L1969.5 756.4 L1962.5 757.9 L1955.5 759.5 L1948.6 761.3 L1941.8 763.4 L1935.0 765.6 L1928.3 767.9 L1921.7 770.5 L1915.2 773.2 L1908.7 776.1 L1902.4 779.2 L1896.1 782.4 L1890.0 785.7 L1884.0 789.2 L1878.1 792.9 L1872.3 796.6 L1866.6 800.6 L1861.0 804.6 L1855.6 808.8 L1850.2 813.2 L1845.0 817.6 L1839.8 822.2 L1834.8 826.9 L1829.8 831.7 L1825.0 836.6 L1820.3 841.7 L1815.7 846.8 L1811.1 852.1 L1806.7 857.5 L1802.4 862.9 L1798.2 868.5 L1794.0 874.1 L1790.0 879.9 L1786.1 885.7 L1782.3 891.6 L1778.5 897.6 L1774.9 903.7 L1771.4 909.8 L1767.9 916.0 L1764.6 922.3 L1761.3 928.7 L1758.1 935.1 L1755.1 941.6 L1752.1 948.1 L1749.2 954.7 L1746.4 961.3 L1743.7 968.0 L1741.0 974.8 L1738.5 981.5 L1736.0 988.3 L1733.7 995.2 L1731.4 1002.1 L1729.2 1009.0 L1727.1 1015.9 L1725.1 1022.9 L1723.1 1029.9 L1721.3 1036.9 L1719.5 1043.9 L1717.8 1050.9 L1716.2 1057.9 L1714.6 1065.0 L1713.2 1072.0 L1711.8 1079.0 L1710.5 1086.1 L1709.2 1093.1 L1708.1 1100.2 L1707.0 1107.2 L1706.0 1114.2 L1705.1 1121.3 L1704.2 1128.3 L1703.4 1135.3 L1702.7 1142.3 L1702.0 1149.4 L1701.4 1156.4 L1700.9 1163.4 L1700.4 1170.5 L1700.0 1177.5 L1699.6 1184.5 L1699.3 1191.5 L1699.1 1198.6 L1698.9 1205.6 L1698.8 1212.6 L1698.7 1219.6 L1698.7 1226.7 L1698.8 1233.7 L1698.9 1240.7 L1699.0 1247.7 L1699.2 1254.7 L1699.4 1261.8 L1699.7 1268.8 L1700.0 1275.8 L1700.4 1282.8 L1700.8 1289.8 L1701.3 1296.9 L1701.8 1303.9 L1702.3 1310.9 L1702.9 1317.9 L1703.5 1324.9 L1704.2 1331.9 L1704.9 1339.0 L1705.6 1346.0 L1706.3 1353.0 L1707.1 1360.0 L1707.9 1367.0 L1708.8 1374.0 L1709.6 1381.0 L1710.5 1388.1 L1711.5 1395.1 L1712.4 1402.1 L1713.4 1409.1 L1714.4 1416.1 L1715.4 1423.1 L1716.4 1430.1 L1717.5 1437.1 L1718.5 1444.1 L1719.6 1451.2 L1720.7 1458.2 L1721.8 1465.2 L1723.0 1472.2 L1724.1 1479.2 L1725.2 1486.2 L1726.4 1493.2 L1727.6 1500.2 L1728.7 1507.2 L1729.9 1514.3 L1731.1 1521.3 L1732.3 1528.3 L1733.5 1535.3 L1734.7 1542.3 L1736.0 1549.3 L1737.2 1556.3 L1738.5 1563.3 L1739.7 1570.3 L1741.0 1577.3 L1742.3 1584.3 L1743.6 1591.3 L1744.9 1598.2 L1746.3 1605.2 L1747.6 1612.2 L1749.0 1619.2 L1750.3 1626.2 L1751.7 1633.1 L1753.1 1640.1 L1754.6 1647.0 L1756.0 1654.0 L1757.5 1660.9 L1759.0 1667.9 L1760.5 1674.8 L1762.0 1681.7 L1763.5 1688.7 L1765.1 1695.6 L1766.6 1702.5 L1768.2 1709.4 L1769.9 1716.3 L1771.5 1723.2 L1773.2 1730.1 L1774.8 1736.9 L1776.5 1743.8 L1778.3 1750.7 L1780.0 1757.5 L1781.8 1764.3 L1783.6 1771.2 L1785.4 1778.0 L1787.3 1784.8 L1789.2 1791.6 L1791.1 1798.4 L1793.0 1805.2 L1795.0 1811.9 L1797.0 1818.7 L1805.5 1847.5"/><path d="M1606.6 1581.9 L1637.6 1556.6 L1642.5 1552.6 L1647.4 1548.7 L1652.4 1544.8 L1657.4 1541.0 L1662.5 1537.2 L1667.7 1533.4 L1672.8 1529.7 L1678.1 1526.0 L1683.3 1522.4 L1688.7 1518.8 L1694.0 1515.3 L1699.4 1511.8 L1704.9 1508.4 L1710.4 1505.0 L1715.9 1501.7 L1721.5 1498.5 L1727.1 1495.3 L1732.7 1492.1 L1738.4 1489.0 L1744.1 1486.0 L1749.9 1483.0 L1755.7 1480.1 L1761.5 1477.3 L1767.4 1474.5 L1773.3 1471.8 L1779.2 1469.2 L1785.2 1466.6 L1791.2 1464.1 L1797.2 1461.6 L1803.3 1459.3 L1809.4 1457.0 L1815.5 1454.8 L1821.6 1452.6 L1827.8 1450.6 L1834.0 1448.6 L1840.2 1446.7 L1846.5 1444.8 L1852.7 1443.1 L1859.0 1441.4 L1865.3 1439.8 L1871.7 1438.3 L1878.0 1436.9 L1884.4 1435.6 L1890.8 1434.4 L1897.2 1433.2 L1903.6 1432.2 L1910.0 1431.2 L1916.4 1430.3 L1922.9 1429.5 L1929.3 1428.8 L1935.7 1428.2 L1942.2 1427.7 L1948.6 1427.3 L1955.1 1427.0 L1961.5 1426.8 L1968.0 1426.7 L1974.4 1426.6 L1980.8 1426.7 L1987.3 1426.9 L1993.7 1427.2 L2000.1 1427.6 L2006.4 1428.1 L2012.8 1428.7 L2019.2 1429.4 L2025.5 1430.2 L2031.8 1431.1 L2038.1 1432.1 L2044.3 1433.3 L2050.6 1434.5 L2056.8 1435.9 L2063.0 1437.3 L2069.1 1438.9 L2075.3 1440.5 L2081.4 1442.3 L2087.5 1444.2 L2093.5 1446.1 L2099.6 1448.2 L2105.6 1450.3 L2111.5 1452.5 L2117.5 1454.9 L2123.4 1457.3 L2129.3 1459.8 L2135.1 1462.4 L2141.0 1465.0 L2146.8 1467.8 L2152.5 1470.6 L2158.3 1473.5 L2164.0 1476.5 L2169.6 1479.6 L2175.3 1482.7 L2180.9 1485.9 L2186.4 1489.2 L2192.0 1492.6 L2197.5 1496.0 L2202.9 1499.5 L2208.3 1503.0 L2213.7 1506.6 L2219.1 1510.3 L2224.4 1514.1 L2229.7 1517.9 L2234.9 1521.7 L2240.1 1525.6 L2245.3 1529.6 L2250.4 1533.6 L2255.5 1537.7 L2260.6 1541.8 L2265.6 1545.9 L2270.6 1550.1 L2275.5 1554.4 L2280.4 1558.7 L2285.2 1563.0 L2290.0 1567.4 L2294.8 1571.9 L2299.5 1576.3 L2304.2 1580.8 L2308.8 1585.4 L2313.4 1590.0 L2318.0 1594.6 L2322.5 1599.3 L2327.0 1604.0 L2331.4 1608.7 L2335.8 1613.5 L2340.2 1618.3 L2344.5 1623.2 L2348.7 1628.1 L2353.0 1633.0 L2357.1 1638.0 L2361.3 1643.0 L2365.4 1648.0 L2369.4 1653.0 L2373.4 1658.1 L2377.4 1663.2 L2381.3 1668.4 L2385.2 1673.6 L2389.0 1678.8 L2392.8 1684.0 L2396.6 1689.3 L2400.3 1694.6 L2404.0 1699.9 L2407.6 1705.2 L2411.2 1710.6 L2414.7 1715.9 L2418.2 1721.4 L2421.6 1726.8 L2425.0 1732.2 L2428.4 1737.7 L2431.7 1743.2 L2434.9 1748.7 L2438.1 1754.3 L2441.3 1759.8 L2444.5 1765.4 L2447.5 1771.0 L2450.6 1776.6 L2453.6 1782.2 L2456.5 1787.8 L2459.4 1793.5 L2462.3 1799.1 L2465.1 1804.8 L2467.8 1810.5 L2480.8 1837.5"/></g><g fill="none" stroke="#fbf9ff" stroke-width="28" stroke-linecap="butt" stroke-linejoin="round"><path d="M2174.5 816.3 L2168.9 811.9 L2163.3 807.6 L2157.5 803.4 L2151.7 799.3 L2145.7 795.3 L2139.7 791.4 L2133.5 787.7 L2127.3 784.0 L2121.0 780.6 L2114.7 777.2 L2108.2 774.0 L2101.7 771.0 L2095.1 768.2 L2088.5 765.6 L2081.8 763.2 L2075.0 761.0 L2068.1 759.0 L2061.3 757.3 L2054.3 755.8 L2047.3 754.6 L2040.3 753.6 L2033.3 752.9 L2026.2 752.4 L2019.1 752.1 L2012.0 752.1 L2004.9 752.2 L1997.8 752.7 L1990.7 753.3 L1983.6 754.1 L1976.5 755.2 L1969.5 756.4 L1962.5 757.9 L1955.5 759.5 L1948.6 761.3 L1941.8 763.4 L1935.0 765.6 L1928.3 767.9 L1921.7 770.5 L1915.2 773.2 L1908.7 776.1 L1902.4 779.2 L1896.1 782.4 L1890.0 785.7 L1884.0 789.2 L1878.1 792.9 L1872.3 796.6 L1866.6 800.6 L1861.0 804.6 L1855.6 808.8 L1850.2 813.2 L1845.0 817.6 L1839.8 822.2 L1834.8 826.9 L1829.8 831.7 L1825.0 836.6 L1820.3 841.7 L1815.7 846.8 L1811.1 852.1 L1806.7 857.5 L1802.4 862.9 L1798.2 868.5 L1794.0 874.1 L1790.0 879.9 L1786.1 885.7 L1782.3 891.6 L1778.5 897.6 L1774.9 903.7 L1771.4 909.8 L1767.9 916.0 L1764.6 922.3 L1761.3 928.7 L1758.1 935.1 L1755.1 941.6 L1752.1 948.1 L1749.2 954.7 L1746.4 961.3 L1743.7 968.0 L1741.0 974.8 L1738.5 981.5 L1736.0 988.3 L1733.7 995.2 L1731.4 1002.1 L1729.2 1009.0 L1727.1 1015.9 L1725.1 1022.9 L1723.1 1029.9 L1721.3 1036.9 L1719.5 1043.9 L1717.8 1050.9 L1716.2 1057.9 L1714.6 1065.0 L1713.2 1072.0 L1711.8 1079.0 L1710.5 1086.1 L1709.2 1093.1 L1708.1 1100.2 L1707.0 1107.2 L1706.0 1114.2 L1705.1 1121.3 L1704.2 1128.3 L1703.4 1135.3 L1702.7 1142.3 L1702.0 1149.4 L1701.4 1156.4 L1700.9 1163.4 L1700.4 1170.5 L1700.0 1177.5 L1699.6 1184.5 L1699.3 1191.5 L1699.1 1198.6 L1698.9 1205.6 L1698.8 1212.6 L1698.7 1219.6 L1698.7 1226.7 L1698.8 1233.7 L1698.9 1240.7 L1699.0 1247.7 L1699.2 1254.7 L1699.4 1261.8 L1699.7 1268.8 L1700.0 1275.8 L1700.4 1282.8 L1700.8 1289.8 L1701.3 1296.9 L1701.8 1303.9 L1702.3 1310.9 L1702.9 1317.9 L1703.5 1324.9 L1704.2 1331.9 L1704.9 1339.0 L1705.6 1346.0 L1706.3 1353.0 L1707.1 1360.0 L1707.9 1367.0 L1708.8 1374.0 L1709.6 1381.0 L1710.5 1388.1 L1711.5 1395.1 L1712.4 1402.1 L1713.4 1409.1 L1714.4 1416.1 L1715.4 1423.1 L1716.4 1430.1 L1717.5 1437.1 L1718.5 1444.1 L1719.6 1451.2 L1720.7 1458.2 L1721.8 1465.2 L1723.0 1472.2 L1724.1 1479.2 L1725.2 1486.2 L1726.4 1493.2 L1727.6 1500.2 L1728.7 1507.2 L1729.9 1514.3 L1731.1 1521.3 L1732.3 1528.3 L1733.5 1535.3 L1734.7 1542.3 L1736.0 1549.3 L1737.2 1556.3 L1738.5 1563.3 L1739.7 1570.3 L1741.0 1577.3 L1742.3 1584.3 L1743.6 1591.3 L1744.9 1598.2 L1746.3 1605.2 L1747.6 1612.2 L1749.0 1619.2 L1750.3 1626.2 L1751.7 1633.1 L1753.1 1640.1 L1754.6 1647.0 L1756.0 1654.0 L1757.5 1660.9 L1759.0 1667.9 L1760.5 1674.8 L1762.0 1681.7 L1763.5 1688.7 L1765.1 1695.6 L1766.6 1702.5 L1768.2 1709.4 L1769.9 1716.3 L1771.5 1723.2 L1773.2 1730.1 L1774.8 1736.9 L1776.5 1743.8 L1778.3 1750.7 L1780.0 1757.5 L1781.8 1764.3 L1783.6 1771.2 L1785.4 1778.0 L1787.3 1784.8 L1789.2 1791.6 L1791.1 1798.4 L1793.0 1805.2 L1795.0 1811.9 L1797.0 1818.7 L1805.5 1847.5"/><path d="M1606.6 1581.9 L1637.6 1556.6 L1642.5 1552.6 L1647.4 1548.7 L1652.4 1544.8 L1657.4 1541.0 L1662.5 1537.2 L1667.7 1533.4 L1672.8 1529.7 L1678.1 1526.0 L1683.3 1522.4 L1688.7 1518.8 L1694.0 1515.3 L1699.4 1511.8 L1704.9 1508.4 L1710.4 1505.0 L1715.9 1501.7 L1721.5 1498.5 L1727.1 1495.3 L1732.7 1492.1 L1738.4 1489.0 L1744.1 1486.0 L1749.9 1483.0 L1755.7 1480.1 L1761.5 1477.3 L1767.4 1474.5 L1773.3 1471.8 L1779.2 1469.2 L1785.2 1466.6 L1791.2 1464.1 L1797.2 1461.6 L1803.3 1459.3 L1809.4 1457.0 L1815.5 1454.8 L1821.6 1452.6 L1827.8 1450.6 L1834.0 1448.6 L1840.2 1446.7 L1846.5 1444.8 L1852.7 1443.1 L1859.0 1441.4 L1865.3 1439.8 L1871.7 1438.3 L1878.0 1436.9 L1884.4 1435.6 L1890.8 1434.4 L1897.2 1433.2 L1903.6 1432.2 L1910.0 1431.2 L1916.4 1430.3 L1922.9 1429.5 L1929.3 1428.8 L1935.7 1428.2 L1942.2 1427.7 L1948.6 1427.3 L1955.1 1427.0 L1961.5 1426.8 L1968.0 1426.7 L1974.4 1426.6 L1980.8 1426.7 L1987.3 1426.9 L1993.7 1427.2 L2000.1 1427.6 L2006.4 1428.1 L2012.8 1428.7 L2019.2 1429.4 L2025.5 1430.2 L2031.8 1431.1 L2038.1 1432.1 L2044.3 1433.3 L2050.6 1434.5 L2056.8 1435.9 L2063.0 1437.3 L2069.1 1438.9 L2075.3 1440.5 L2081.4 1442.3 L2087.5 1444.2 L2093.5 1446.1 L2099.6 1448.2 L2105.6 1450.3 L2111.5 1452.5 L2117.5 1454.9 L2123.4 1457.3 L2129.3 1459.8 L2135.1 1462.4 L2141.0 1465.0 L2146.8 1467.8 L2152.5 1470.6 L2158.3 1473.5 L2164.0 1476.5 L2169.6 1479.6 L2175.3 1482.7 L2180.9 1485.9 L2186.4 1489.2 L2192.0 1492.6 L2197.5 1496.0 L2202.9 1499.5 L2208.3 1503.0 L2213.7 1506.6 L2219.1 1510.3 L2224.4 1514.1 L2229.7 1517.9 L2234.9 1521.7 L2240.1 1525.6 L2245.3 1529.6 L2250.4 1533.6 L2255.5 1537.7 L2260.6 1541.8 L2265.6 1545.9 L2270.6 1550.1 L2275.5 1554.4 L2280.4 1558.7 L2285.2 1563.0 L2290.0 1567.4 L2294.8 1571.9 L2299.5 1576.3 L2304.2 1580.8 L2308.8 1585.4 L2313.4 1590.0 L2318.0 1594.6 L2322.5 1599.3 L2327.0 1604.0 L2331.4 1608.7 L2335.8 1613.5 L2340.2 1618.3 L2344.5 1623.2 L2348.7 1628.1 L2353.0 1633.0 L2357.1 1638.0 L2361.3 1643.0 L2365.4 1648.0 L2369.4 1653.0 L2373.4 1658.1 L2377.4 1663.2 L2381.3 1668.4 L2385.2 1673.6 L2389.0 1678.8 L2392.8 1684.0 L2396.6 1689.3 L2400.3 1694.6 L2404.0 1699.9 L2407.6 1705.2 L2411.2 1710.6 L2414.7 1715.9 L2418.2 1721.4 L2421.6 1726.8 L2425.0 1732.2 L2428.4 1737.7 L2431.7 1743.2 L2434.9 1748.7 L2438.1 1754.3 L2441.3 1759.8 L2444.5 1765.4 L2447.5 1771.0 L2450.6 1776.6 L2453.6 1782.2 L2456.5 1787.8 L2459.4 1793.5 L2462.3 1799.1 L2465.1 1804.8 L2467.8 1810.5 L2480.8 1837.5"/></g><g fill="none" stroke="#7877fc" stroke-width="7.8" stroke-opacity="0.97"><path d="M2174.5 816.3 L2168.9 811.9 L2163.3 807.6 L2157.5 803.4 L2151.7 799.3 L2145.7 795.3 L2139.7 791.4 L2133.5 787.7 L2127.3 784.0 L2121.0 780.6 L2114.7 777.2 L2108.2 774.0 L2101.7 771.0 L2095.1 768.2 L2088.5 765.6 L2081.8 763.2 L2075.0 761.0 L2068.1 759.0 L2061.3 757.3 L2054.3 755.8 L2047.3 754.6 L2040.3 753.6 L2033.3 752.9 L2026.2 752.4 L2019.1 752.1 L2012.0 752.1 L2004.9 752.2 L1997.8 752.7 L1990.7 753.3 L1983.6 754.1 L1976.5 755.2 L1969.5 756.4 L1962.5 757.9 L1955.5 759.5 L1948.6 761.3 L1941.8 763.4 L1935.0 765.6 L1928.3 767.9 L1921.7 770.5 L1915.2 773.2 L1908.7 776.1 L1902.4 779.2 L1896.1 782.4 L1890.0 785.7 L1884.0 789.2 L1878.1 792.9 L1872.3 796.6 L1866.6 800.6 L1861.0 804.6 L1855.6 808.8 L1850.2 813.2 L1845.0 817.6 L1839.8 822.2 L1834.8 826.9 L1829.8 831.7 L1825.0 836.6 L1820.3 841.7 L1815.7 846.8 L1811.1 852.1 L1806.7 857.5 L1802.4 862.9 L1798.2 868.5 L1794.0 874.1 L1790.0 879.9 L1786.1 885.7 L1782.3 891.6 L1778.5 897.6 L1774.9 903.7 L1771.4 909.8 L1767.9 916.0 L1764.6 922.3 L1761.3 928.7 L1758.1 935.1 L1755.1 941.6 L1752.1 948.1 L1749.2 954.7 L1746.4 961.3 L1743.7 968.0 L1741.0 974.8 L1738.5 981.5 L1736.0 988.3 L1733.7 995.2 L1731.4 1002.1 L1729.2 1009.0 L1727.1 1015.9 L1725.1 1022.9 L1723.1 1029.9 L1721.3 1036.9 L1719.5 1043.9 L1717.8 1050.9 L1716.2 1057.9 L1714.6 1065.0 L1713.2 1072.0 L1711.8 1079.0 L1710.5 1086.1 L1709.2 1093.1 L1708.1 1100.2 L1707.0 1107.2 L1706.0 1114.2 L1705.1 1121.3 L1704.2 1128.3 L1703.4 1135.3 L1702.7 1142.3 L1702.0 1149.4 L1701.4 1156.4 L1700.9 1163.4 L1700.4 1170.5 L1700.0 1177.5 L1699.6 1184.5 L1699.3 1191.5 L1699.1 1198.6 L1698.9 1205.6 L1698.8 1212.6 L1698.7 1219.6 L1698.7 1226.7 L1698.8 1233.7 L1698.9 1240.7 L1699.0 1247.7 L1699.2 1254.7 L1699.4 1261.8 L1699.7 1268.8 L1700.0 1275.8 L1700.4 1282.8 L1700.8 1289.8 L1701.3 1296.9 L1701.8 1303.9 L1702.3 1310.9 L1702.9 1317.9 L1703.5 1324.9 L1704.2 1331.9 L1704.9 1339.0 L1705.6 1346.0 L1706.3 1353.0 L1707.1 1360.0 L1707.9 1367.0 L1708.8 1374.0 L1709.6 1381.0 L1710.5 1388.1 L1711.5 1395.1 L1712.4 1402.1 L1713.4 1409.1 L1714.4 1416.1 L1715.4 1423.1 L1716.4 1430.1 L1717.5 1437.1 L1718.5 1444.1 L1719.6 1451.2 L1720.7 1458.2 L1721.8 1465.2 L1723.0 1472.2 L1724.1 1479.2 L1725.2 1486.2 L1726.4 1493.2 L1727.6 1500.2 L1728.7 1507.2 L1729.9 1514.3 L1731.1 1521.3 L1732.3 1528.3 L1733.5 1535.3 L1734.7 1542.3 L1736.0 1549.3 L1737.2 1556.3 L1738.5 1563.3 L1739.7 1570.3 L1741.0 1577.3 L1742.3 1584.3 L1743.6 1591.3 L1744.9 1598.2 L1746.3 1605.2 L1747.6 1612.2 L1749.0 1619.2 L1750.3 1626.2 L1751.7 1633.1 L1753.1 1640.1 L1754.6 1647.0 L1756.0 1654.0 L1757.5 1660.9 L1759.0 1667.9 L1760.5 1674.8 L1762.0 1681.7 L1763.5 1688.7 L1765.1 1695.6 L1766.6 1702.5 L1768.2 1709.4 L1769.9 1716.3 L1771.5 1723.2 L1773.2 1730.1 L1774.8 1736.9 L1776.5 1743.8 L1778.3 1750.7 L1780.0 1757.5 L1781.8 1764.3 L1783.6 1771.2 L1785.4 1778.0 L1787.3 1784.8 L1789.2 1791.6 L1791.1 1798.4 L1793.0 1805.2 L1795.0 1811.9 L1797.0 1818.7 L1805.5 1847.5"/><path d="M1606.6 1581.9 L1637.6 1556.6 L1642.5 1552.6 L1647.4 1548.7 L1652.4 1544.8 L1657.4 1541.0 L1662.5 1537.2 L1667.7 1533.4 L1672.8 1529.7 L1678.1 1526.0 L1683.3 1522.4 L1688.7 1518.8 L1694.0 1515.3 L1699.4 1511.8 L1704.9 1508.4 L1710.4 1505.0 L1715.9 1501.7 L1721.5 1498.5 L1727.1 1495.3 L1732.7 1492.1 L1738.4 1489.0 L1744.1 1486.0 L1749.9 1483.0 L1755.7 1480.1 L1761.5 1477.3 L1767.4 1474.5 L1773.3 1471.8 L1779.2 1469.2 L1785.2 1466.6 L1791.2 1464.1 L1797.2 1461.6 L1803.3 1459.3 L1809.4 1457.0 L1815.5 1454.8 L1821.6 1452.6 L1827.8 1450.6 L1834.0 1448.6 L1840.2 1446.7 L1846.5 1444.8 L1852.7 1443.1 L1859.0 1441.4 L1865.3 1439.8 L1871.7 1438.3 L1878.0 1436.9 L1884.4 1435.6 L1890.8 1434.4 L1897.2 1433.2 L1903.6 1432.2 L1910.0 1431.2 L1916.4 1430.3 L1922.9 1429.5 L1929.3 1428.8 L1935.7 1428.2 L1942.2 1427.7 L1948.6 1427.3 L1955.1 1427.0 L1961.5 1426.8 L1968.0 1426.7 L1974.4 1426.6 L1980.8 1426.7 L1987.3 1426.9 L1993.7 1427.2 L2000.1 1427.6 L2006.4 1428.1 L2012.8 1428.7 L2019.2 1429.4 L2025.5 1430.2 L2031.8 1431.1 L2038.1 1432.1 L2044.3 1433.3 L2050.6 1434.5 L2056.8 1435.9 L2063.0 1437.3 L2069.1 1438.9 L2075.3 1440.5 L2081.4 1442.3 L2087.5 1444.2 L2093.5 1446.1 L2099.6 1448.2 L2105.6 1450.3 L2111.5 1452.5 L2117.5 1454.9 L2123.4 1457.3 L2129.3 1459.8 L2135.1 1462.4 L2141.0 1465.0 L2146.8 1467.8 L2152.5 1470.6 L2158.3 1473.5 L2164.0 1476.5 L2169.6 1479.6 L2175.3 1482.7 L2180.9 1485.9 L2186.4 1489.2 L2192.0 1492.6 L2197.5 1496.0 L2202.9 1499.5 L2208.3 1503.0 L2213.7 1506.6 L2219.1 1510.3 L2224.4 1514.1 L2229.7 1517.9 L2234.9 1521.7 L2240.1 1525.6 L2245.3 1529.6 L2250.4 1533.6 L2255.5 1537.7 L2260.6 1541.8 L2265.6 1545.9 L2270.6 1550.1 L2275.5 1554.4 L2280.4 1558.7 L2285.2 1563.0 L2290.0 1567.4 L2294.8 1571.9 L2299.5 1576.3 L2304.2 1580.8 L2308.8 1585.4 L2313.4 1590.0 L2318.0 1594.6 L2322.5 1599.3 L2327.0 1604.0 L2331.4 1608.7 L2335.8 1613.5 L2340.2 1618.3 L2344.5 1623.2 L2348.7 1628.1 L2353.0 1633.0 L2357.1 1638.0 L2361.3 1643.0 L2365.4 1648.0 L2369.4 1653.0 L2373.4 1658.1 L2377.4 1663.2 L2381.3 1668.4 L2385.2 1673.6 L2389.0 1678.8 L2392.8 1684.0 L2396.6 1689.3 L2400.3 1694.6 L2404.0 1699.9 L2407.6 1705.2 L2411.2 1710.6 L2414.7 1715.9 L2418.2 1721.4 L2421.6 1726.8 L2425.0 1732.2 L2428.4 1737.7 L2431.7 1743.2 L2434.9 1748.7 L2438.1 1754.3 L2441.3 1759.8 L2444.5 1765.4 L2447.5 1771.0 L2450.6 1776.6 L2453.6 1782.2 L2456.5 1787.8 L2459.4 1793.5 L2462.3 1799.1 L2465.1 1804.8 L2467.8 1810.5 L2480.8 1837.5"/></g><g transform="translate(2269.3 877.4) rotate(33.3)"><rect x="-150" y="-33.5" width="75" height="66" rx="6" fill="url(#gNeck)"/><rect x="-150" y="-33.5" width="75" height="66" rx="6" fill="url(#gNeck2)"/><rect x="70" y="-51.8" width="104" height="102.5" rx="5" fill="url(#gTip)"/><rect x="70" y="-51.8" width="104" height="102.5" rx="5" fill="url(#gTip2)"/><rect x="-81.3" y="-60.8" width="162.6" height="121.6" rx="2.5" fill="url(#gBody)"/></g><path d="M2247.6 860.5 L2267 877.4 L2282.2 855.5 L2295.7 903.6 L2277.9 884.2 L2262.7 906.1 Z" fill="#ffbf00"/><rect x="2134" y="785" width="22" height="22" fill="#006dfc"/><rect x="1688" y="1203" width="22" height="22" fill="#006dfc"/><rect x="1942" y="1417.5" width="22" height="22" fill="#006dfc"/></g><path d="M1720.5 1859.0 L1727.5 1866.0 L1734.5 1859.0" fill="none" stroke="#8a8a8a" stroke-width="2"/><rect x="1754.5" y="1845" width="3" height="28" fill="#232323"/><path d="M1918 1859.0 L1925.5 1866.0 L1933 1859.0" fill="none" stroke="#8a8a8a" stroke-width="2"/><rect x="1952.8" y="1845" width="3" height="28" fill="#232323"/><rect x="1965" y="1841" width="42" height="37" rx="4" fill="#161616"/><path d="M1975 1868 L1972.5 1868 L1972.5 1846.5 L1999.5 1846.5 L1999.5 1860" fill="none" stroke="#7f7f7f" stroke-width="2"/><path d="M1988.5 1849 L1980 1859.5 L1986 1859.5 L1983 1868 L1991.5 1857 L1985.5 1857 Z" fill="#7f7f7f"/><path d="M1992 1864 L2002 1864 L1997 1870 Z" fill="#7f7f7f"/><rect x="2017.5" y="1847.5" width="26" height="21" fill="#3a3a3a" stroke="#7f7f7f" stroke-width="2"/><rect x="2018.5" y="1848.5" width="6.1" height="6.4" fill="#5e5e5e"/><rect x="2018.5" y="1861.3" width="6.1" height="6.4" fill="#5e5e5e"/><rect x="2024.6" y="1854.9" width="6.1" height="6.4" fill="#5e5e5e"/><rect x="2030.7" y="1848.5" width="6.1" height="6.4" fill="#5e5e5e"/><rect x="2030.7" y="1861.3" width="6.1" height="6.4" fill="#5e5e5e"/><rect x="2036.8" y="1854.9" width="6.1" height="6.4" fill="#5e5e5e"/><path d="M2063 1855 L2071 1847 L2089 1847 L2089 1868.5 L2063 1868.5 Z" fill="none" stroke="#7f7f7f" stroke-width="2"/><rect x="2069" y="1845" width="4" height="4" fill="#7f7f7f"/><rect x="2087" y="1845" width="4" height="4" fill="#7f7f7f"/><rect x="2087" y="1866.5" width="4" height="4" fill="#7f7f7f"/><rect x="2061" y="1866.5" width="4" height="4" fill="#7f7f7f"/><rect x="2061" y="1853" width="4" height="4" fill="#7f7f7f"/><rect x="2087" y="1855" width="4" height="4" fill="#7f7f7f"/><rect x="2106" y="1847" width="26.5" height="22.5" fill="none" stroke="#7f7f7f" stroke-width="2"/><rect x="2112" y="1853" width="14.5" height="10" fill="#7f7f7f"/><rect x="2149" y="1848" width="25" height="17" fill="none" stroke="#7f7f7f" stroke-width="2"/><path d="M2161.5 1844.5 L2161.5 1868 M2146 1856.5 L2177 1856.5 M2158.5 1856.5 L2164.5 1856.5" stroke="#7f7f7f" stroke-width="2"/><path d="M2165 1868 L2175 1868 L2170 1873.5 Z" fill="#7f7f7f"/><rect x="2193" y="1845" width="3" height="28" fill="#232323"/><circle cx="2225.5" cy="1851" r="6" fill="#c41a1a"/><circle cx="2220" cy="1859" r="6" fill="#1e9a2a"/><circle cx="2231" cy="1859" r="6" fill="#3355cc"/><path d="M2232 1868 L2242 1868 L2237 1873.5 Z" fill="#7f7f7f"/><circle cx="2270.5" cy="1858" r="12.2" fill="#7f7f7f"/><path d="M2274.8 1859.2 L2275.5 1869.5" stroke="#1b1b1b" stroke-width="1.6"/><path d="M2271.7 1862.3 L2263.1 1868.0" stroke="#1b1b1b" stroke-width="1.6"/><path d="M2267.3 1861.2 L2258.1 1856.6" stroke="#1b1b1b" stroke-width="1.6"/><path d="M2266.2 1856.8 L2265.5 1846.5" stroke="#1b1b1b" stroke-width="1.6"/><path d="M2269.3 1853.7 L2277.9 1848.0" stroke="#1b1b1b" stroke-width="1.6"/><path d="M2273.7 1854.8 L2282.9 1859.4" stroke="#1b1b1b" stroke-width="1.6"/><circle cx="2270.5" cy="1858" r="4.5" fill="#1b1b1b"/><rect x="2368.5" y="1845" width="3" height="28" fill="#232323"/><path d="M2388.5 1853 L2396 1853 L2399 1848 L2408 1848 L2411 1853 L2416.5 1853 L2416.5 1869.5 L2388.5 1869.5 Z" fill="#7f7f7f"/><circle cx="2402.5" cy="1860.5" r="5" fill="#1b1b1b"/><circle cx="2402.5" cy="1860.5" r="2.8" fill="#7f7f7f"/><path d="M2431 1861 Q2444 1846 2457 1861 Q2444 1876 2431 1861 Z" fill="#2e2e2e"/><circle cx="2444" cy="1861" r="4.5" fill="#1b1b1b"/><path d="M2443 1848 L2447 1848 L2449 1844.5 L2456 1844.5 L2458 1848 L2461 1848 L2461 1856 L2443 1856 Z" fill="#2e2e2e"/><circle cx="2452" cy="1851.5" r="2.2" fill="#1b1b1b"/><rect x="2477" y="1845" width="3" height="28" fill="#232323"/><rect x="2489.5" y="1841" width="24" height="35.5" rx="5" fill="#111" stroke="#222"/></svg>
<div style="position:absolute;left:192px;top:756px;width:1396px;height:1124px;background:#1c1c1c;"></div>
<div style="position:absolute;z-index:3;left:283.00px;top:785.09px;font-size:23.19px;line-height:23.19px;font-weight:400;font-style:normal;letter-spacing:0.000px;color:#767676;white-space:pre;transform:scaleX(0.8446);transform-origin:0 0;">USB 5</div>
<div style="position:absolute;z-index:3;left:493.00px;top:785.09px;font-size:23.19px;line-height:23.19px;font-weight:400;font-style:normal;letter-spacing:0.000px;color:#ababab;white-space:pre;transform:scaleX(0.8506);transform-origin:0 0;">USB 8</div>
<div style="position:absolute;z-index:3;left:214.90px;top:845.67px;font-size:29.57px;line-height:29.57px;font-weight:700;font-style:normal;letter-spacing:0.000px;color:#2c7cc4;white-space:pre;transform:scaleX(1.0085);transform-origin:0 0;">0:00:05:03</div>
<div style="position:absolute;z-index:3;left:210.80px;top:879.67px;font-size:19.57px;line-height:19.57px;font-weight:400;font-style:normal;letter-spacing:0.000px;color:#1f63a6;white-space:pre;transform:scaleX(1.0118);transform-origin:0 0;">00303 (60.00 fps)</div>
<div style="position:absolute;box-sizing:border-box;left:390px;top:851px;width:295px;height:37.7px;background:#0e0e0e;border:1px solid #202020;border-radius:5px;"></div>
<div style="position:absolute;z-index:3;left:1029.20px;top:871.72px;font-size:19.28px;line-height:19.28px;font-weight:400;font-style:normal;letter-spacing:0.000px;color:#767676;white-space:pre;transform:scaleX(0.9699);transform-origin:0 0;">02s</div>
<div style="position:absolute;z-index:3;left:1196.00px;top:871.72px;font-size:19.28px;line-height:19.28px;font-weight:400;font-style:normal;letter-spacing:0.000px;color:#767676;white-space:pre;transform:scaleX(0.9699);transform-origin:0 0;">04s</div>
<div style="position:absolute;z-index:3;left:1362.00px;top:871.72px;font-size:19.28px;line-height:19.28px;font-weight:400;font-style:normal;letter-spacing:0.000px;color:#767676;white-space:pre;transform:scaleX(0.9699);transform-origin:0 0;">06s</div>
<div style="position:absolute;z-index:3;left:1520px;top:868px;width:33px;height:26px;overflow:hidden">
<div style="position:absolute;z-index:3;left:8.00px;top:3.72px;font-size:19.28px;line-height:19.28px;font-weight:400;font-style:normal;letter-spacing:0.000px;color:#767676;white-space:pre;transform:scaleX(0.9699);transform-origin:0 0;">08s</div>
</div>
<div style="position:absolute;left:1021px;top:903.3px;width:533px;height:2.7px;background:#080808;"></div>
<div style="position:absolute;left:192px;top:906px;width:829px;height:1.5px;background:#141414;"></div>
<div style="position:absolute;left:192px;top:907.5px;width:829px;height:37.5px;background:#1b1b1b;"></div>
<div style="position:absolute;left:192px;top:945px;width:829px;height:2px;background:#141414;"></div>
<div style="position:absolute;z-index:3;left:400.00px;top:918.95px;font-size:17.83px;line-height:17.83px;font-weight:400;font-style:normal;letter-spacing:0.000px;color:#767676;white-space:pre;">#</div>
<div style="position:absolute;z-index:3;left:466.70px;top:918.95px;font-size:17.83px;line-height:17.83px;font-weight:400;font-style:normal;letter-spacing:0.000px;color:#767676;white-space:pre;transform:scaleX(1.0087);transform-origin:0 0;">Layer Name</div>
<div style="position:absolute;z-index:3;left:816.50px;top:910.35px;font-size:34.06px;line-height:34.06px;font-weight:400;font-style:italic;letter-spacing:0.000px;color:#7f7f7f;white-space:pre;transform:scaleX(0.7612);transform-origin:0 0;">fx</div>
<div style="position:absolute;left:192px;top:947px;width:829px;height:31.200000000000045px;background:#212121;"></div>
<div style="position:absolute;z-index:3;left:403.30px;top:952.31px;font-size:22.46px;line-height:22.46px;font-weight:700;font-style:normal;letter-spacing:0.000px;color:#767676;white-space:pre;">2</div>
<div style="position:absolute;left:1022px;top:947px;width:531px;height:30.200000000000045px;background:#573f73;"></div>
<div style="position:absolute;left:192px;top:980.8px;width:829px;height:30.600000000000023px;background:#212121;"></div>
<div style="position:absolute;z-index:3;left:403.30px;top:985.81px;font-size:22.46px;line-height:22.46px;font-weight:700;font-style:normal;letter-spacing:0.000px;color:#767676;white-space:pre;">3</div>
<div style="position:absolute;left:1022px;top:980.8px;width:531px;height:29.600000000000023px;background:#573f73;"></div>
<div style="position:absolute;left:192px;top:1014.8px;width:829px;height:30.799999999999955px;background:#212121;"></div>
<div style="position:absolute;z-index:3;left:403.30px;top:1019.91px;font-size:22.46px;line-height:22.46px;font-weight:700;font-style:normal;letter-spacing:0.000px;color:#767676;white-space:pre;transform:scaleX(0.9705);transform-origin:0 0;">28</div>
<div style="position:absolute;z-index:3;left:817.50px;top:1014.90px;font-size:31.88px;line-height:31.88px;font-weight:400;font-style:italic;letter-spacing:0.000px;color:#7f7f7f;white-space:pre;transform:scaleX(0.8131);transform-origin:0 0;">fx</div>
<div style="position:absolute;left:1022px;top:1014.8px;width:531px;height:29.799999999999955px;background:#573f73;"></div>
<div style="position:absolute;left:192px;top:1049px;width:829px;height:31px;background:#212121;"></div>
<div style="position:absolute;z-index:3;left:403.30px;top:1054.21px;font-size:22.46px;line-height:22.46px;font-weight:700;font-style:normal;letter-spacing:0.000px;color:#767676;white-space:pre;transform:scaleX(0.9705);transform-origin:0 0;">31</div>
<div style="position:absolute;z-index:3;left:817.50px;top:1049.20px;font-size:31.88px;line-height:31.88px;font-weight:400;font-style:italic;letter-spacing:0.000px;color:#7f7f7f;white-space:pre;transform:scaleX(0.8131);transform-origin:0 0;">fx</div>
<div style="position:absolute;left:1022px;top:1049px;width:531px;height:30px;background:#573f73;"></div>
<div style="position:absolute;z-index:3;left:499.00px;top:951.71px;font-size:23.04px;line-height:23.04px;font-weight:700;font-style:normal;letter-spacing:0.000px;color:#767676;white-space:pre;transform:scaleX(0.9414);transform-origin:0 0;">[Phone]</div>
<div style="position:absolute;z-index:3;left:499.00px;top:985.19px;font-size:23.65px;line-height:23.65px;font-weight:700;font-style:normal;letter-spacing:0.000px;color:#767676;white-space:pre;transform:scaleX(0.9108);transform-origin:0 0;">main</div>
<div style="position:absolute;z-index:3;left:499.00px;top:1020.21px;font-size:22.46px;line-height:22.46px;font-weight:700;font-style:normal;letter-spacing:0.000px;color:#767676;white-space:pre;transform:scaleX(0.9431);transform-origin:0 0;">[usb head]</div>
<div style="position:absolute;z-index:3;left:499.00px;top:1054.43px;font-size:22.32px;line-height:22.32px;font-weight:700;font-style:normal;letter-spacing:0.000px;color:#767676;white-space:pre;transform:scaleX(0.9739);transform-origin:0 0;">Main Path</div>
<div style="position:absolute;left:192px;top:978.2px;width:829px;height:2.6px;background:#1a1a1a;"></div>
<div style="position:absolute;left:192px;top:1011.4px;width:800px;height:3.4px;background:#141414;"></div>
<div style="position:absolute;left:192px;top:1045.6px;width:800px;height:3.4px;background:#141414;"></div>
<div style="position:absolute;left:992px;top:1011.4px;width:29px;height:3.4px;background:#1c1c1c;"></div>
<div style="position:absolute;left:992px;top:1045.6px;width:29px;height:3.4px;background:#1c1c1c;"></div>
<div style="position:absolute;left:192px;top:1080px;width:829px;height:138px;background:#1b1b1b;"></div>
<div style="position:absolute;left:192px;top:1080px;width:829px;height:1.6px;background:#141414;"></div>
<div style="position:absolute;left:192px;top:1114.2px;width:829px;height:1.6px;background:#141414;"></div>
<div style="position:absolute;left:192px;top:1148.6px;width:829px;height:1.6px;background:#141414;"></div>
<div style="position:absolute;left:192px;top:1182.5px;width:829px;height:1.6px;background:#141414;"></div>
<div style="position:absolute;left:192px;top:1216.5px;width:829px;height:1.6px;background:#141414;"></div>
<div style="position:absolute;z-index:3;left:202.00px;top:1083.39px;font-size:27.54px;line-height:27.54px;font-weight:400;font-style:italic;letter-spacing:0.000px;color:#7a7a7a;white-space:pre;transform:scaleX(0.8967);transform-origin:0 0;">fx</div>
<div style="position:absolute;z-index:3;left:202.00px;top:1185.39px;font-size:27.54px;line-height:27.54px;font-weight:400;font-style:italic;letter-spacing:0.000px;color:#7a7a7a;white-space:pre;transform:scaleX(0.8967);transform-origin:0 0;">fx</div>
<div style="position:absolute;z-index:3;left:436.80px;top:1088.66px;font-size:22.75px;line-height:22.75px;font-weight:400;font-style:normal;letter-spacing:0.000px;color:#767676;white-space:pre;transform:scaleX(0.9515);transform-origin:0 0;">Railway - Parent Controls</div>
<div style="position:absolute;z-index:3;left:725.00px;top:1088.66px;font-size:22.75px;line-height:22.75px;font-weight:400;font-style:normal;letter-spacing:0.000px;color:#2c7cc4;white-space:pre;transform:scaleX(0.8823);transform-origin:0 0;">Reset</div>
<div style="position:absolute;z-index:3;left:540.80px;top:1121.93px;font-size:24.20px;line-height:24.20px;font-weight:400;font-style:normal;letter-spacing:0.000px;color:#767676;white-space:pre;transform:scaleX(0.9053);transform-origin:0 0;">Position</div>
<div style="position:absolute;z-index:3;left:727.20px;top:1121.93px;font-size:24.20px;line-height:24.20px;font-weight:400;font-style:normal;letter-spacing:0.000px;color:#2c7cc4;white-space:pre;transform:scaleX(0.8642);transform-origin:0 0;">100.00</div>
<div style="position:absolute;z-index:3;left:793.00px;top:1121.93px;font-size:24.20px;line-height:24.20px;font-weight:400;font-style:normal;letter-spacing:0.000px;color:#767676;white-space:pre;">%</div>
<div style="position:absolute;z-index:3;left:540.80px;top:1155.93px;font-size:24.20px;line-height:24.20px;font-weight:400;font-style:normal;letter-spacing:0.000px;color:#767676;white-space:pre;transform:scaleX(0.9130);transform-origin:0 0;">Rotation</div>
<div style="position:absolute;z-index:3;left:727.20px;top:1155.93px;font-size:24.20px;line-height:24.20px;font-weight:400;font-style:normal;letter-spacing:0.000px;color:#2c7cc4;white-space:pre;transform:scaleX(0.8642);transform-origin:0 0;">100.00</div>
<div style="position:absolute;z-index:3;left:793.00px;top:1155.93px;font-size:24.20px;line-height:24.20px;font-weight:400;font-style:normal;letter-spacing:0.000px;color:#767676;white-space:pre;">%</div>
<div style="position:absolute;z-index:3;left:436.80px;top:1188.77px;font-size:25.22px;line-height:25.22px;font-weight:400;font-style:normal;letter-spacing:0.000px;color:#767676;white-space:pre;transform:scaleX(0.9112);transform-origin:0 0;">offset mult</div>
<div style="position:absolute;z-index:3;left:725.00px;top:1189.71px;font-size:22.46px;line-height:22.46px;font-weight:400;font-style:normal;letter-spacing:0.000px;color:#2c7cc4;white-space:pre;transform:scaleX(0.8937);transform-origin:0 0;">Reset</div>
<div style="position:absolute;left:192px;top:1218px;width:829px;height:32px;background:#212121;"></div>
<div style="position:absolute;z-index:3;left:403.30px;top:1223.71px;font-size:22.46px;line-height:22.46px;font-weight:700;font-style:normal;letter-spacing:0.000px;color:#767676;white-space:pre;transform:scaleX(0.9705);transform-origin:0 0;">32</div>
<div style="position:absolute;left:1022px;top:1218px;width:531px;height:31px;background:#573f73;"></div>
<div style="position:absolute;z-index:3;left:499.00px;top:1221.86px;font-size:24.64px;line-height:24.64px;font-weight:700;font-style:normal;letter-spacing:0.000px;color:#767676;white-space:pre;transform:scaleX(0.8417);transform-origin:0 0;">bg</div>
<div style="position:absolute;left:192px;top:1250px;width:829px;height:1.5px;background:#181818;"></div>
<div style="position:absolute;left:1020px;top:906px;width:2px;height:940px;background:#090909;"></div>
<div style="position:absolute;left:1022px;top:906px;width:531px;height:30px;background:#474747;"></div>
<div style="position:absolute;left:1022px;top:936px;width:531px;height:2px;background:#080808;"></div>
<div style="position:absolute;left:1022px;top:938px;width:531px;height:8px;background:#1c1c1c;"></div>
<div style="position:absolute;left:1022px;top:938px;width:277px;height:6px;background:#138a1e;"></div>
<div style="position:absolute;left:1299px;top:938px;width:71px;height:6px;background:#0e1e8a;"></div>
<div style="position:absolute;left:1370px;top:938px;width:51px;height:6px;background:#138a1e;"></div>
<div style="position:absolute;left:1022px;top:1080px;width:531px;height:138px;background:#232323;"></div>
<div style="position:absolute;left:1022px;top:1080px;width:531px;height:1.6px;background:#111;"></div>
<div style="position:absolute;left:1022px;top:1114.2px;width:531px;height:1.6px;background:#111;"></div>
<div style="position:absolute;left:1022px;top:1148.6px;width:531px;height:1.6px;background:#111;"></div>
<div style="position:absolute;left:1022px;top:1182.5px;width:531px;height:1.6px;background:#111;"></div>
<div style="position:absolute;left:1022px;top:1216.5px;width:531px;height:1.6px;background:#111;"></div>
<div style="position:absolute;left:1022px;top:1250px;width:531px;height:596px;background:#242424;"></div>
<div style="position:absolute;left:1553px;top:906px;width:35px;height:974px;background:#1d1d1d;"></div>
<div style="position:absolute;left:192px;top:1845.5px;width:1045px;height:2.5px;background:#060606;"></div>
<div style="position:absolute;left:192px;top:1848px;width:1396px;height:32px;background:#1c1c1c;"></div>
<div style="position:absolute;left:1237px;top:1848px;width:351px;height:32px;background:#1b1b1b;"></div>
<div style="position:absolute;z-index:3;left:399.00px;top:1852.27px;font-size:23.91px;line-height:23.91px;font-weight:400;font-style:normal;letter-spacing:0.000px;color:#727272;white-space:pre;transform:scaleX(0.8985);transform-origin:0 0;">Frame Render Time</div>
<div style="position:absolute;z-index:3;left:601.50px;top:1852.27px;font-size:23.91px;line-height:23.91px;font-weight:700;font-style:normal;letter-spacing:0.000px;color:#b09a62;white-space:pre;transform:scaleX(0.9156);transform-origin:0 0;">118ms</div>
<div style="position:absolute;box-sizing:border-box;left:719.7px;top:1849.6px;width:267.3px;height:28.8px;background:#141414;border:1px solid #222;border-radius:3px;"></div>
<div style="position:absolute;z-index:3;left:733.00px;top:1852.27px;font-size:23.91px;line-height:23.91px;font-weight:400;font-style:normal;letter-spacing:0.000px;color:#767676;white-space:pre;transform:scaleX(0.9093);transform-origin:0 0;">Toggle Switches / Modes</div>
<svg style="position:absolute;left:0;top:0;z-index:2" width="2700" height="2025"><rect x="240.2" y="784" width="20.5" height="20" fill="#7b6c55"/><path d="M420 791.5 L430.5 802.0 M430.5 791.5 L420 802.0" stroke="#8a8a8a" stroke-width="1.6"/><rect x="450.4" y="784" width="20.5" height="20" fill="#7b6c55"/><rect x="572" y="790.00" width="17" height="2" fill="#8a8a8a"/><rect x="572" y="796.00" width="17" height="2" fill="#8a8a8a"/><rect x="572" y="802.00" width="17" height="2" fill="#8a8a8a"/><rect x="420" y="828" width="169" height="4.2" fill="#8e8e8e"/><circle cx="401" cy="866" r="0" fill="none"/><circle cx="415.5" cy="866" r="6.3" fill="none" stroke="#7f7f7f" stroke-width="1.8"/><path d="M411 870.5 L403.5 879.5" stroke="#7f7f7f" stroke-width="2.2" stroke-linecap="round"/><path d="M425 873 L436.5 873 L430.75 879 Z" fill="#7f7f7f"/><path d="M717 861 L729 861 M725 860 L725 876.5 L741 876.5 M725 866 L733 866" fill="none" stroke="#7f7f7f" stroke-width="2.4"/><rect x="722" y="857.5" width="7" height="6" fill="#7f7f7f"/><rect x="731" y="857.5" width="15.5" height="6" fill="#7f7f7f"/><rect x="739" y="870.5" width="7.5" height="6" fill="#7f7f7f"/><path d="M741 881 L751 881 L746 885.5 Z" fill="#7f7f7f"/><rect x="784" y="872" width="33" height="9.8" fill="#1d4d84"/><path d="M787 872 Q787 858 800.5 858 Q814 858 814 872 Z" fill="#2f7fd0"/><rect x="796.5" y="864" width="8" height="14" rx="3" fill="#2f7fd0"/><rect x="784" y="867.5" width="33" height="4.5" fill="#2f7fd0"/><circle cx="796" cy="865" r="2.7" fill="#1c1c1c"/><circle cx="805" cy="865" r="2.7" fill="#1c1c1c"/><rect x="847" y="856" width="20" height="27" fill="#7f7f7f"/><path d="M841 863 L841 883.5 L858 883.5" fill="none" stroke="#7f7f7f" stroke-width="2.5"/><rect x="849" y="857.5" width="2" height="2.5" fill="#1c1c1c"/><rect x="863" y="857.5" width="2" height="2.5" fill="#1c1c1c"/><rect x="843.5" y="865.0" width="1.8" height="1.8" fill="#1c1c1c"/><rect x="849" y="861.7" width="2" height="2.5" fill="#1c1c1c"/><rect x="863" y="861.7" width="2" height="2.5" fill="#1c1c1c"/><rect x="843.5" y="868.2" width="1.8" height="1.8" fill="#1c1c1c"/><rect x="849" y="865.9" width="2" height="2.5" fill="#1c1c1c"/><rect x="863" y="865.9" width="2" height="2.5" fill="#1c1c1c"/><rect x="843.5" y="871.4" width="1.8" height="1.8" fill="#1c1c1c"/><rect x="849" y="870.1" width="2" height="2.5" fill="#1c1c1c"/><rect x="863" y="870.1" width="2" height="2.5" fill="#1c1c1c"/><rect x="843.5" y="874.6" width="1.8" height="1.8" fill="#1c1c1c"/><rect x="849" y="874.3" width="2" height="2.5" fill="#1c1c1c"/><rect x="863" y="874.3" width="2" height="2.5" fill="#1c1c1c"/><rect x="843.5" y="877.8" width="1.8" height="1.8" fill="#1c1c1c"/><rect x="849" y="878.5" width="2" height="2.5" fill="#1c1c1c"/><rect x="863" y="878.5" width="2" height="2.5" fill="#1c1c1c"/><rect x="843.5" y="881.0" width="1.8" height="1.8" fill="#1c1c1c"/><rect x="853" y="866.5" width="8" height="2" fill="#1c1c1c"/><circle cx="899" cy="873.5" r="9" fill="none" stroke="#7f7f7f" stroke-width="2"/><circle cx="904" cy="868.5" r="9" fill="#1c1c1c" stroke="#7f7f7f" stroke-width="2"/><circle cx="909" cy="864" r="9.5" fill="#555" stroke="#7f7f7f" stroke-width="2"/><rect x="958.5" y="858" width="29" height="25" fill="none" stroke="#7f7f7f" stroke-width="2.3"/><path d="M965 866 Q971 866 973 872 Q975 878 983 878" fill="none" stroke="#7f7f7f" stroke-width="2"/><rect x="968" y="853.5" width="1.6" height="4.5" fill="#7f7f7f"/><rect x="975" y="853.5" width="1.6" height="4.5" fill="#7f7f7f"/><rect x="982" y="853.5" width="1.6" height="4.5" fill="#7f7f7f"/><rect x="955" y="862" width="3.5" height="1.6" fill="#7f7f7f"/><rect x="955" y="870" width="3.5" height="1.6" fill="#7f7f7f"/><rect x="955" y="878" width="3.5" height="1.6" fill="#7f7f7f"/><path d="M1021 903 L1021 856 Q1021 844 1033 844 L1542 844 Q1554 844 1554 856 L1554 903 Z" fill="#151515"/><rect x="1034.5" y="846" width="371.5" height="19.2" fill="#29261f" stroke="#3a3528" stroke-width="1"/><rect x="1112.7" y="846.5" width="249" height="18.5" fill="#4a4a4a" stroke="#080808" stroke-width="2"/><path d="M1112.7 848 L1106 848 Q1100.7 848 1100.7 856 Q1100.7 864 1106 864 L1112.7 864 Z" fill="#2a66b0"/><path d="M1362 848 L1369 848 Q1375 848 1375 856 Q1375 864 1369 864 L1362 864 Z" fill="#2a66b0"/><rect x="1243.5" y="850" width="1.5" height="14" fill="#2a66b0"/><rect x="1044.6" y="894" width="1.8" height="9.3" fill="#8a8a8a"/><rect x="1211.1" y="894" width="1.8" height="9.3" fill="#8a8a8a"/><rect x="1377.3999999999999" y="894" width="1.8" height="9.3" fill="#8a8a8a"/><rect x="1543.1" y="894" width="1.8" height="9.3" fill="#8a8a8a"/><path d="M201 927.5 Q212 916.0 223 927.5 Q212 939.0 201 927.5 Z" fill="#7f7f7f"/><circle cx="212" cy="927.5" r="4.6" fill="#1c1c1c"/><circle cx="210.8" cy="926.3" r="1.3" fill="#7f7f7f"/><path d="M230 922.5 L235 922.5 L243 915.5 L243 938.5 L235 931.5 L230 931.5 Z" fill="#7f7f7f"/><path d="M246.5 921 Q250 927 246.5 933 M249.5 917.5 Q255.5 927 249.5 936.5" fill="none" stroke="#7f7f7f" stroke-width="1.8"/><circle cx="271.3" cy="927.5" r="7.4" fill="#7f7f7f"/><path d="M297 924.5 L297 921.5 Q297 916.5 301.5 916.5 Q305.5 916.5 306 920.0" fill="none" stroke="#7f7f7f" stroke-width="2"/><rect x="293" y="924.5" width="16.5" height="11.5" fill="#7f7f7f"/><circle cx="301.25" cy="929.0" r="2.2" fill="#1b1b1b"/><rect x="300.2" y="929.5" width="2.1" height="4" fill="#1b1b1b"/><rect x="324.6" y="916" width="2" height="22" fill="#0a0a0a"/><rect x="388.4" y="916" width="2" height="22" fill="#0a0a0a"/><rect x="454.6" y="916" width="2" height="22" fill="#0a0a0a"/><rect x="714.4" y="916" width="2" height="22" fill="#0a0a0a"/><rect x="988" y="916" width="2" height="22" fill="#0a0a0a"/><path d="M354 916 L365 916 L377 928 L366.5 938.5 L354 926 Z" fill="#7f7f7f"/><circle cx="359" cy="921" r="2.2" fill="#1b1b1b"/><path d="M728.2 928.3 Q728.2 915.8 737.5 915.8 Q746.8 915.8 746.8 928.3 L740.1 928.3 L740.1 933.3 Q737.5 935.8 734.9 933.3 L734.9 928.3 Z" fill="#7f7f7f"/><circle cx="734.1" cy="922.5999999999999" r="2.3" fill="#1b1b1b"/><circle cx="740.9" cy="922.5999999999999" r="2.3" fill="#1b1b1b"/><rect x="725.0" y="929.8" width="8" height="2.4" fill="#7f7f7f"/><rect x="742.0" y="929.8" width="8" height="2.4" fill="#7f7f7f"/><circle cx="767.4" cy="927" r="3.6" fill="none" stroke="#7f7f7f" stroke-width="1.8"/><path d="M772.60 927.00 L777.40 927.00" stroke="#7f7f7f" stroke-width="1.7"/><path d="M771.08 930.68 L774.47 934.07" stroke="#7f7f7f" stroke-width="1.7"/><path d="M767.40 932.20 L767.40 937.00" stroke="#7f7f7f" stroke-width="1.7"/><path d="M763.72 930.68 L760.33 934.07" stroke="#7f7f7f" stroke-width="1.7"/><path d="M762.20 927.00 L757.40 927.00" stroke="#7f7f7f" stroke-width="1.7"/><path d="M763.72 923.32 L760.33 919.93" stroke="#7f7f7f" stroke-width="1.7"/><path d="M767.40 921.80 L767.40 917.00" stroke="#7f7f7f" stroke-width="1.7"/><path d="M771.08 923.32 L774.47 919.93" stroke="#7f7f7f" stroke-width="1.7"/><rect x="787.0" y="914.5" width="3.2" height="3.2" fill="#7f7f7f"/><rect x="790.4" y="918.4" width="3.2" height="3.2" fill="#7f7f7f"/><rect x="793.8" y="922.3" width="3.2" height="3.2" fill="#7f7f7f"/><rect x="797.2" y="926.2" width="3.2" height="3.2" fill="#7f7f7f"/><rect x="800.6" y="930.1" width="3.2" height="3.2" fill="#7f7f7f"/><rect x="804.0" y="934.0" width="3.2" height="3.2" fill="#7f7f7f"/><rect x="848.5" y="914.5" width="20.5" height="20" fill="#7f7f7f"/><path d="M845 919 L845 937.5 L866 937.5" fill="none" stroke="#7f7f7f" stroke-width="2"/><rect x="850" y="916.0" width="2" height="2.3" fill="#1b1b1b"/><rect x="865.5" y="916.0" width="2" height="2.3" fill="#1b1b1b"/><rect x="850" y="919.8" width="2" height="2.3" fill="#1b1b1b"/><rect x="865.5" y="919.8" width="2" height="2.3" fill="#1b1b1b"/><rect x="850" y="923.6" width="2" height="2.3" fill="#1b1b1b"/><rect x="865.5" y="923.6" width="2" height="2.3" fill="#1b1b1b"/><rect x="850" y="927.4" width="2" height="2.3" fill="#1b1b1b"/><rect x="865.5" y="927.4" width="2" height="2.3" fill="#1b1b1b"/><rect x="850" y="931.2" width="2" height="2.3" fill="#1b1b1b"/><rect x="865.5" y="931.2" width="2" height="2.3" fill="#1b1b1b"/><rect x="855" y="923.5" width="8" height="2" fill="#1b1b1b"/><circle cx="882.5" cy="931" r="7.5" fill="none" stroke="#7f7f7f" stroke-width="1.8"/><circle cx="886" cy="927" r="7.5" fill="#1b1b1b" stroke="#7f7f7f" stroke-width="1.8"/><circle cx="891" cy="923" r="8.5" fill="#555" stroke="#7f7f7f" stroke-width="1.8"/><circle cx="917.5" cy="928" r="9" fill="none" stroke="#7f7f7f" stroke-width="2"/><path d="M923.9 921.6 A9 9 0 0 1 911.1 934.4 Z" fill="#7f7f7f"/><path d="M947 916 L956 921 L956 932 L947 937 L938 932 L938 921 Z M938 921 L947 926 L956 921 M947 926 L947 937" fill="none" stroke="#7f7f7f" stroke-width="1.8" stroke-linejoin="round"/><rect x="198.8" y="948" width="25.8" height="27.7" fill="#191919"/><path d="M201 962.6 Q212 951.1 223 962.6 Q212 974.1 201 962.6 Z" fill="#7f7f7f"/><circle cx="212" cy="962.6" r="4.6" fill="#1c1c1c"/><circle cx="210.8" cy="961.4" r="1.3" fill="#7f7f7f"/><rect x="258.7" y="948" width="25.8" height="27.7" fill="#191919"/><rect x="288.7" y="948" width="25.8" height="27.7" fill="#191919"/><path d="M338.5 958.1 L343.5 963.1 L338.5 968.1" fill="none" stroke="#7f7f7f" stroke-width="2"/><rect x="360" y="950" width="24.8" height="24.2" fill="#8a5cc2"/><rect x="458" y="950.2" width="33" height="26" fill="#7a7a7a"/><rect x="462.5" y="954.2" width="24" height="18" fill="#bdbdbd"/><rect x="459" y="952.2" width="2" height="2.5" fill="#222"/><rect x="488" y="952.2" width="2" height="2.5" fill="#222"/><rect x="459" y="957.0" width="2" height="2.5" fill="#222"/><rect x="488" y="957.0" width="2" height="2.5" fill="#222"/><rect x="459" y="961.8" width="2" height="2.5" fill="#222"/><rect x="488" y="961.8" width="2" height="2.5" fill="#222"/><rect x="459" y="966.6" width="2" height="2.5" fill="#222"/><rect x="488" y="966.6" width="2" height="2.5" fill="#222"/><rect x="459" y="971.4" width="2" height="2.5" fill="#222"/><rect x="488" y="971.4" width="2" height="2.5" fill="#222"/><circle cx="469" cy="959.7" r="4" fill="#3a7ad8"/><rect x="472" y="957.2" width="10" height="9" fill="#d83a3a"/><path d="M473 962.2 L479 971.2 L467 971.2 Z" fill="#2a9a3a"/><rect x="724.2" y="948.5" width="26" height="27.2" fill="#191919"/><rect x="754.8" y="948.5" width="26" height="27.2" fill="#191919"/><rect x="784.7" y="948.5" width="26" height="27.2" fill="#191919"/><rect x="874.2" y="948.5" width="26" height="27.2" fill="#191919"/><rect x="904.5" y="948.5" width="26" height="27.2" fill="#191919"/><rect x="935" y="948.5" width="26" height="27.2" fill="#191919"/><path d="M728.2 964.6 Q728.2 952.1 737.5 952.1 Q746.8 952.1 746.8 964.6 L740.1 964.6 L740.1 969.6 Q737.5 972.1 734.9 969.6 L734.9 964.6 Z" fill="#7f7f7f"/><circle cx="734.1" cy="958.9" r="2.3" fill="#191919"/><circle cx="740.9" cy="958.9" r="2.3" fill="#191919"/><rect x="725.0" y="966.1" width="8" height="2.4" fill="#7f7f7f"/><rect x="742.0" y="966.1" width="8" height="2.4" fill="#7f7f7f"/><path d="M787.5 972.6 L807.5 952.6" stroke="#7f7f7f" stroke-width="2.4" stroke-linecap="round"/><rect x="198.8" y="981.8" width="25.8" height="27.1" fill="#191919"/><path d="M201 996.0999999999999 Q212 984.5999999999999 223 996.0999999999999 Q212 1007.5999999999999 201 996.0999999999999 Z" fill="#7f7f7f"/><circle cx="212" cy="996.0999999999999" r="4.6" fill="#1c1c1c"/><circle cx="210.8" cy="994.8999999999999" r="1.3" fill="#7f7f7f"/><rect x="258.7" y="981.8" width="25.8" height="27.1" fill="#191919"/><rect x="288.7" y="981.8" width="25.8" height="27.1" fill="#191919"/><path d="M338.5 991.5999999999999 L343.5 996.5999999999999 L338.5 1001.5999999999999" fill="none" stroke="#7f7f7f" stroke-width="2"/><rect x="360" y="983.8" width="24.8" height="24.2" fill="#8a5cc2"/><rect x="461" y="982.3" width="27.6" height="28" fill="#c0c0c0" stroke="#000" stroke-width="2"/><rect x="724.2" y="982.3" width="26" height="26.6" fill="#191919"/><rect x="754.8" y="982.3" width="26" height="26.6" fill="#191919"/><rect x="784.7" y="982.3" width="26" height="26.6" fill="#191919"/><rect x="874.2" y="982.3" width="26" height="26.6" fill="#191919"/><rect x="904.5" y="982.3" width="26" height="26.6" fill="#191919"/><rect x="935" y="982.3" width="26" height="26.6" fill="#191919"/><path d="M728.2 998.0999999999999 Q728.2 985.5999999999999 737.5 985.5999999999999 Q746.8 985.5999999999999 746.8 998.0999999999999 L740.1 998.0999999999999 L740.1 1003.0999999999999 Q737.5 1005.5999999999999 734.9 1003.0999999999999 L734.9 998.0999999999999 Z" fill="#7f7f7f"/><circle cx="734.1" cy="992.3999999999999" r="2.3" fill="#191919"/><circle cx="740.9" cy="992.3999999999999" r="2.3" fill="#191919"/><rect x="725.0" y="999.5999999999999" width="8" height="2.4" fill="#7f7f7f"/><rect x="742.0" y="999.5999999999999" width="8" height="2.4" fill="#7f7f7f"/><path d="M787.5 1006.0999999999999 L807.5 986.0999999999999" stroke="#7f7f7f" stroke-width="2.4" stroke-linecap="round"/><rect x="198.8" y="1015.8" width="25.8" height="27.3" fill="#191919"/><path d="M201 1030.1999999999998 Q212 1018.6999999999998 223 1030.1999999999998 Q212 1041.6999999999998 201 1030.1999999999998 Z" fill="#7f7f7f"/><circle cx="212" cy="1030.1999999999998" r="4.6" fill="#1c1c1c"/><circle cx="210.8" cy="1028.9999999999998" r="1.3" fill="#7f7f7f"/><rect x="258.7" y="1015.8" width="25.8" height="27.3" fill="#191919"/><rect x="288.7" y="1015.8" width="25.8" height="27.3" fill="#191919"/><path d="M338.5 1025.6999999999998 L343.5 1030.6999999999998 L338.5 1035.6999999999998" fill="none" stroke="#7f7f7f" stroke-width="2"/><rect x="360" y="1017.8" width="24.8" height="24.2" fill="#8a5cc2"/><rect x="458" y="1018.0" width="33" height="26" fill="#7a7a7a"/><rect x="462.5" y="1022.0" width="24" height="18" fill="#bdbdbd"/><rect x="459" y="1020.0" width="2" height="2.5" fill="#222"/><rect x="488" y="1020.0" width="2" height="2.5" fill="#222"/><rect x="459" y="1024.8" width="2" height="2.5" fill="#222"/><rect x="488" y="1024.8" width="2" height="2.5" fill="#222"/><rect x="459" y="1029.6" width="2" height="2.5" fill="#222"/><rect x="488" y="1029.6" width="2" height="2.5" fill="#222"/><rect x="459" y="1034.4" width="2" height="2.5" fill="#222"/><rect x="488" y="1034.4" width="2" height="2.5" fill="#222"/><rect x="459" y="1039.2" width="2" height="2.5" fill="#222"/><rect x="488" y="1039.2" width="2" height="2.5" fill="#222"/><circle cx="469" cy="1027.5" r="4" fill="#3a7ad8"/><rect x="472" y="1025.0" width="10" height="9" fill="#d83a3a"/><path d="M473 1030.0 L479 1039.0 L467 1039.0 Z" fill="#2a9a3a"/><rect x="724.2" y="1016.3" width="26" height="26.8" fill="#191919"/><rect x="754.8" y="1016.3" width="26" height="26.8" fill="#191919"/><rect x="784.7" y="1016.3" width="26" height="26.8" fill="#191919"/><rect x="815" y="1016.3" width="26" height="26.8" fill="#191919"/><rect x="874.2" y="1016.3" width="26" height="26.8" fill="#191919"/><rect x="904.5" y="1016.3" width="26" height="26.8" fill="#191919"/><rect x="935" y="1016.3" width="26" height="26.8" fill="#191919"/><path d="M728.2 1032.1999999999998 Q728.2 1019.6999999999998 737.5 1019.6999999999998 Q746.8 1019.6999999999998 746.8 1032.1999999999998 L740.1 1032.1999999999998 L740.1 1037.1999999999998 Q737.5 1039.6999999999998 734.9 1037.1999999999998 L734.9 1032.1999999999998 Z" fill="#7f7f7f"/><circle cx="734.1" cy="1026.4999999999998" r="2.3" fill="#191919"/><circle cx="740.9" cy="1026.4999999999998" r="2.3" fill="#191919"/><rect x="725.0" y="1033.6999999999998" width="8" height="2.4" fill="#7f7f7f"/><rect x="742.0" y="1033.6999999999998" width="8" height="2.4" fill="#7f7f7f"/><path d="M787.5 1040.1999999999998 L807.5 1020.1999999999998" stroke="#7f7f7f" stroke-width="2.4" stroke-linecap="round"/><rect x="198.8" y="1050" width="25.8" height="27.5" fill="#191919"/><path d="M201 1064.5 Q212 1053.0 223 1064.5 Q212 1076.0 201 1064.5 Z" fill="#7f7f7f"/><circle cx="212" cy="1064.5" r="4.6" fill="#1c1c1c"/><circle cx="210.8" cy="1063.3" r="1.3" fill="#7f7f7f"/><rect x="258.7" y="1050" width="25.8" height="27.5" fill="#191919"/><rect x="288.7" y="1050" width="25.8" height="27.5" fill="#191919"/><path d="M338 1060.5 L345.5 1067.5 L353 1060.5" fill="none" stroke="#7f7f7f" stroke-width="2"/><rect x="360" y="1052" width="24.8" height="24.2" fill="#8a5cc2"/><polygon points="473.50,1052.70 476.62,1060.20 484.72,1060.85 478.55,1066.14 480.44,1074.05 473.50,1069.81 466.56,1074.05 468.45,1066.14 462.28,1060.85 470.38,1060.20" fill="#7f7f7f"/><rect x="724.2" y="1050.5" width="26" height="27.0" fill="#191919"/><rect x="754.8" y="1050.5" width="26" height="27.0" fill="#191919"/><rect x="784.7" y="1050.5" width="26" height="27.0" fill="#191919"/><rect x="815" y="1050.5" width="26" height="27.0" fill="#191919"/><rect x="874.2" y="1050.5" width="26" height="27.0" fill="#191919"/><rect x="904.5" y="1050.5" width="26" height="27.0" fill="#191919"/><rect x="935" y="1050.5" width="26" height="27.0" fill="#191919"/><path d="M728.2 1066.5 Q728.2 1054.0 737.5 1054.0 Q746.8 1054.0 746.8 1066.5 L740.1 1066.5 L740.1 1071.5 Q737.5 1074.0 734.9 1071.5 L734.9 1066.5 Z" fill="#7f7f7f"/><circle cx="734.1" cy="1060.8" r="2.3" fill="#191919"/><circle cx="740.9" cy="1060.8" r="2.3" fill="#191919"/><rect x="725.0" y="1068.0" width="8" height="2.4" fill="#7f7f7f"/><rect x="742.0" y="1068.0" width="8" height="2.4" fill="#7f7f7f"/><circle cx="767.4" cy="1064.5" r="3.6" fill="none" stroke="#5e5e5e" stroke-width="1.8"/><path d="M772.20 1064.50 L776.90 1064.50" stroke="#5e5e5e" stroke-width="1.7"/><path d="M770.79 1067.89 L774.12 1071.22" stroke="#5e5e5e" stroke-width="1.7"/><path d="M767.40 1069.30 L767.40 1074.00" stroke="#5e5e5e" stroke-width="1.7"/><path d="M764.01 1067.89 L760.68 1071.22" stroke="#5e5e5e" stroke-width="1.7"/><path d="M762.60 1064.50 L757.90 1064.50" stroke="#5e5e5e" stroke-width="1.7"/><path d="M764.01 1061.11 L760.68 1057.78" stroke="#5e5e5e" stroke-width="1.7"/><path d="M767.40 1059.70 L767.40 1055.00" stroke="#5e5e5e" stroke-width="1.7"/><path d="M770.79 1061.11 L774.12 1057.78" stroke="#5e5e5e" stroke-width="1.7"/><path d="M787.5 1074.5 L807.5 1054.5" stroke="#7f7f7f" stroke-width="2.4" stroke-linecap="round"/><rect x="198.3" y="1083.8" width="26.2" height="26.2" fill="#111"/><rect x="198.3" y="1185.5" width="26.2" height="26.2" fill="#111"/><path d="M407 1096.0 L414.0 1103.0 L421 1096.0" fill="none" stroke="#7f7f7f" stroke-width="2"/><path d="M217 1123.35 L205 1130.85 L217 1138.35 Z" fill="#7f7f7f"/><path d="M241.3 1122.85 L249.3 1130.85 L241.3 1138.85 L233.3 1130.85 Z" fill="none" stroke="#7f7f7f" stroke-width="1.8"/><path d="M266 1123.35 L278 1130.85 L266 1138.35 Z" fill="#444"/><rect x="463" y="1118.85" width="30.4" height="29" fill="#161616"/><circle cx="477.5" cy="1133.85" r="9.6" fill="none" stroke="#2a6eb8" stroke-width="2.4"/><rect x="474.0" y="1120.35" width="7" height="2.2" fill="#2a6eb8"/><rect x="476.4" y="1121.85" width="2.2" height="3" fill="#2a6eb8"/><path d="M468.5 1123.85 L471.0 1126.35" stroke="#2a6eb8" stroke-width="2.4"/><path d="M477.5 1133.85 L482.5 1128.35" stroke="#2a6eb8" stroke-width="2.4" stroke-linecap="round"/><path d="M502.5 1122.35 L502.5 1143.85 L525 1143.85 M504 1138.35 L510 1129.35 L515 1136.35 L522 1127.35" fill="none" stroke="#7f7f7f" stroke-width="2"/><path d="M217 1157.35 L205 1164.85 L217 1172.35 Z" fill="#7f7f7f"/><path d="M241.3 1156.85 L249.3 1164.85 L241.3 1172.85 L233.3 1164.85 Z" fill="none" stroke="#7f7f7f" stroke-width="1.8"/><path d="M266 1157.35 L278 1164.85 L266 1172.35 Z" fill="#444"/><rect x="463" y="1152.85" width="30.4" height="29" fill="#161616"/><circle cx="477.5" cy="1167.85" r="9.6" fill="none" stroke="#2a6eb8" stroke-width="2.4"/><rect x="474.0" y="1154.35" width="7" height="2.2" fill="#2a6eb8"/><rect x="476.4" y="1155.85" width="2.2" height="3" fill="#2a6eb8"/><path d="M468.5 1157.85 L471.0 1160.35" stroke="#2a6eb8" stroke-width="2.4"/><path d="M477.5 1167.85 L482.5 1162.35" stroke="#2a6eb8" stroke-width="2.4" stroke-linecap="round"/><path d="M502.5 1156.35 L502.5 1177.85 L525 1177.85 M504 1172.35 L510 1163.35 L515 1170.35 L522 1161.35" fill="none" stroke="#7f7f7f" stroke-width="2"/><path d="M407.5 1194 L412.5 1199 L407.5 1204" fill="none" stroke="#7f7f7f" stroke-width="2"/><rect x="198.8" y="1219" width="25.8" height="28.5" fill="#191919"/><path d="M201 1234.0 Q212 1222.5 223 1234.0 Q212 1245.5 201 1234.0 Z" fill="#7f7f7f"/><circle cx="212" cy="1234.0" r="4.6" fill="#1c1c1c"/><circle cx="210.8" cy="1232.8" r="1.3" fill="#7f7f7f"/><rect x="258.7" y="1219" width="25.8" height="28.5" fill="#191919"/><rect x="288.7" y="1219" width="25.8" height="28.5" fill="#191919"/><path d="M338.5 1229.5 L343.5 1234.5 L338.5 1239.5" fill="none" stroke="#7f7f7f" stroke-width="2"/><rect x="360" y="1221" width="24.8" height="24.2" fill="#8a5cc2"/><polygon points="473.50,1222.20 476.62,1229.70 484.72,1230.35 478.55,1235.64 480.44,1243.55 473.50,1239.31 466.56,1243.55 468.45,1235.64 462.28,1230.35 470.38,1229.70" fill="#7f7f7f"/><rect x="724.2" y="1219.5" width="26" height="28.0" fill="#191919"/><rect x="754.8" y="1219.5" width="26" height="28.0" fill="#191919"/><rect x="784.7" y="1219.5" width="26" height="28.0" fill="#191919"/><rect x="874.2" y="1219.5" width="26" height="28.0" fill="#191919"/><rect x="904.5" y="1219.5" width="26" height="28.0" fill="#191919"/><rect x="935" y="1219.5" width="26" height="28.0" fill="#191919"/><path d="M728.2 1236.0 Q728.2 1223.5 737.5 1223.5 Q746.8 1223.5 746.8 1236.0 L740.1 1236.0 L740.1 1241.0 Q737.5 1243.5 734.9 1241.0 L734.9 1236.0 Z" fill="#7f7f7f"/><circle cx="734.1" cy="1230.3" r="2.3" fill="#191919"/><circle cx="740.9" cy="1230.3" r="2.3" fill="#191919"/><rect x="725.0" y="1237.5" width="8" height="2.4" fill="#7f7f7f"/><rect x="742.0" y="1237.5" width="8" height="2.4" fill="#7f7f7f"/><circle cx="767.4" cy="1234.0" r="3.6" fill="none" stroke="#5e5e5e" stroke-width="1.8"/><path d="M772.20 1234.00 L776.90 1234.00" stroke="#5e5e5e" stroke-width="1.7"/><path d="M770.79 1237.39 L774.12 1240.72" stroke="#5e5e5e" stroke-width="1.7"/><path d="M767.40 1238.80 L767.40 1243.50" stroke="#5e5e5e" stroke-width="1.7"/><path d="M764.01 1237.39 L760.68 1240.72" stroke="#5e5e5e" stroke-width="1.7"/><path d="M762.60 1234.00 L757.90 1234.00" stroke="#5e5e5e" stroke-width="1.7"/><path d="M764.01 1230.61 L760.68 1227.28" stroke="#5e5e5e" stroke-width="1.7"/><path d="M767.40 1229.20 L767.40 1224.50" stroke="#5e5e5e" stroke-width="1.7"/><path d="M770.79 1230.61 L774.12 1227.28" stroke="#5e5e5e" stroke-width="1.7"/><path d="M787.5 1244.0 L807.5 1224.0" stroke="#7f7f7f" stroke-width="2.4" stroke-linecap="round"/><path d="M1194.7 1124 L1212.7 1124 L1212.7 1127 Q1206.7 1130 1206.7 1133 Q1206.7 1136 1212.7 1139 L1212.7 1142 L1194.7 1142 L1194.7 1139 Q1200.7 1136 1200.7 1133 Q1200.7 1130 1194.7 1127 Z" fill="#7a7a7a"/><path d="M1203.7 1124 L1212.7 1124 L1212.7 1127 Q1206.7 1130 1206.7 1133 Q1206.7 1136 1212.7 1139 L1212.7 1142 L1203.7 1142 Z" fill="#9a9a9a"/><path d="M1194.7 1158 L1212.7 1158 L1212.7 1161 Q1206.7 1164 1206.7 1167 Q1206.7 1170 1212.7 1173 L1212.7 1176 L1194.7 1176 L1194.7 1173 Q1200.7 1170 1200.7 1167 Q1200.7 1164 1194.7 1161 Z" fill="#7a7a7a"/><path d="M1203.7 1158 L1212.7 1158 L1212.7 1161 Q1206.7 1164 1206.7 1167 Q1206.7 1170 1212.7 1173 L1212.7 1176 L1203.7 1176 Z" fill="#9a9a9a"/><path d="M1232.3 1124 L1250.3 1124 L1250.3 1127 Q1244.3 1130 1244.3 1133 Q1244.3 1136 1250.3 1139 L1250.3 1142 L1232.3 1142 L1232.3 1139 Q1238.3 1136 1238.3 1133 Q1238.3 1130 1232.3 1127 Z" fill="#7a7a7a"/><path d="M1241.3 1124 L1250.3 1124 L1250.3 1127 Q1244.3 1130 1244.3 1133 Q1244.3 1136 1250.3 1139 L1250.3 1142 L1241.3 1142 Z" fill="#9a9a9a"/><path d="M1232.3 1158 L1250.3 1158 L1250.3 1161 Q1244.3 1164 1244.3 1167 Q1244.3 1170 1250.3 1173 L1250.3 1176 L1232.3 1176 L1232.3 1173 Q1238.3 1170 1238.3 1167 Q1238.3 1164 1232.3 1161 Z" fill="#7a7a7a"/><path d="M1241.3 1158 L1250.3 1158 L1250.3 1161 Q1244.3 1164 1244.3 1167 Q1244.3 1170 1250.3 1173 L1250.3 1176 L1241.3 1176 Z" fill="#9a9a9a"/><path d="M1293.8 1088 L1305.8 1088 M1299.8 1088 L1299.8 1110 M1293.8 1110 L1305.8 1110" stroke="#8a8a8a" stroke-width="2"/><rect x="1298.3" y="1088" width="3" height="22" fill="#8a8a8a"/><path d="M1293.8 1189 L1305.8 1189 M1299.8 1189 L1299.8 1211.5 M1293.8 1211.5 L1305.8 1211.5" stroke="#8a8a8a" stroke-width="2"/><rect x="1298.3" y="1189" width="3" height="22.5" fill="#8a8a8a"/><circle cx="1323" cy="1200.8" r="4.8" fill="#8a8a8a"/><circle cx="1371" cy="1200.8" r="4.8" fill="#8a8a8a"/><rect x="1298.4" y="880" width="2" height="966" fill="#2a6bbd"/><path d="M1288 876 L1311 876 L1311 890 L1299.5 902.5 L1288 890 Z" fill="#2a6bbd"/><rect x="1296" y="887" width="7" height="1.8" fill="#111"/><rect x="1298.6" y="887" width="1.8" height="15" fill="#111"/><path d="M1560 910 L1583 910 L1583 929 L1571.5 938 L1560 929 Z" fill="#7a7a7a"/><path d="M1555.5 966.5 L1569.5 951.5 L1569.5 966.5 Z" fill="none" stroke="#7a7a7a" stroke-width="1.8" stroke-linejoin="round"/><rect x="1570" y="956" width="13" height="14" fill="#7a7a7a"/><circle cx="1567.5" cy="969" r="5.6" fill="#1d1d1d" stroke="#7a7a7a" stroke-width="1.8"/><rect x="198" y="1850" width="33.5" height="28" fill="#161616"/><rect x="205" y="1854.5" width="13" height="12" fill="none" stroke="#2a72c0" stroke-width="2"/><rect x="209.5" y="1859" width="13" height="12" fill="#161616" stroke="#2a72c0" stroke-width="2"/><rect x="214" y="1863.5" width="13" height="12" fill="#161616" stroke="#2a72c0" stroke-width="2"/><circle cx="220.5" cy="1869.5" r="2" fill="#2a72c0"/><circle cx="250.5" cy="1860.5" r="7.3" fill="none" stroke="#7f7f7f" stroke-width="2"/><path d="M250.5 1861.5 L257.8 1861.5 A7.3 7.3 0 0 1 250.5 1867.8 Z" fill="#7f7f7f"/><rect x="250.5" y="1861.5" width="13" height="12.5" fill="none" stroke="#7f7f7f" stroke-width="2"/><path d="M284 1852.5 L299 1852.5 L299 1857 L304 1864.5 L299 1872 L299 1875 L284 1875 L284 1872 L279 1864.5 L284 1857 Z" fill="#7f7f7f"/><rect x="288" y="1852.5" width="7" height="22.5" fill="#4a4a4a"/><circle cx="327" cy="1864" r="7" fill="#7f7f7f"/><path d="M317 1872 L342 1872 L338 1867 L330 1870 Z" fill="#7f7f7f"/><path d="M333 1869 L336 1857 M336 1869 L342 1860" stroke="#7f7f7f" stroke-width="1.6"/><circle cx="336" cy="1857" r="1.9" fill="#7f7f7f"/><circle cx="342.5" cy="1859.5" r="1.9" fill="#7f7f7f"/><path d="M1032.5 1866 L1039 1858 L1044 1863 L1046 1861 L1052.5 1866 Z" fill="#7f7f7f"/><rect x="1084.6" y="1861.3" width="86.4" height="2.2" fill="#3a3a3a"/><circle cx="1128.6" cy="1862.5" r="7.5" fill="#1c1c1c" stroke="#7f7f7f" stroke-width="2.6"/><path d="M1193.5 1870 L1203 1858 L1208 1864 L1213 1857 L1227.5 1870 Z" fill="#7f7f7f"/><path d="M1201 1870 L1209 1860" stroke="#1c1c1c" stroke-width="1.5"/><rect x="1286" y="1848" width="154.4" height="29.6" rx="14.8" fill="#141414"/></svg>
</div></div>
</body></html>
